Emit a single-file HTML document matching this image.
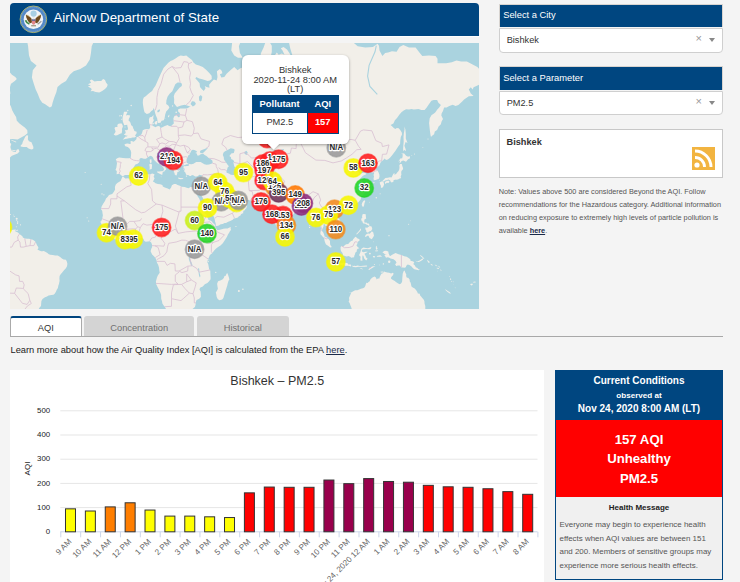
<!DOCTYPE html>
<html><head><meta charset="utf-8"><style>
html,body{margin:0;padding:0;width:740px;height:582px;overflow:hidden;background:#f4f4f4;font-family:"Liberation Sans",sans-serif}
.t{position:absolute;line-height:1;white-space:nowrap}
</style></head><body>
<div style="position:absolute;left:10px;top:3px;width:469px;height:33px;background:#004680;border-radius:4px 4px 0 0"></div><div style="position:absolute;left:10px;top:36px;width:470px;height:1.2px;background:#fdfdfd"></div><svg style="position:absolute;left:19px;top:5px" width="29" height="29" viewBox="0 0 29 29">
<circle cx="14.4" cy="14.3" r="13.3" fill="#5288c6" stroke="#a9b06a" stroke-width="1"/>
<circle cx="14.4" cy="14.3" r="12.2" fill="none" stroke="#7aa6d8" stroke-width="0.8" stroke-dasharray="1.2 0.8"/>
<circle cx="14.4" cy="14.3" r="9.7" fill="#f2f4f6"/>
<circle cx="14.6" cy="8.6" r="3.1" fill="#a8cfe3"/>
<path d="M6.8 9.8 C8.5 10.0 10.8 11.5 12.6 13.8 L13.0 17.4 L11.0 18.2 C9.0 16.8 7.2 13.5 6.8 9.8Z" fill="#6e4a1e"/><path d="M7.4 9.9 C8.5 10.2 9.5 10.8 10.3 11.6" stroke="#c9b46a" stroke-width="0.7" fill="none"/>
<path d="M22.2 9.8 C20.5 10.0 18.2 11.5 16.4 13.8 L16.0 17.4 L18.0 18.2 C20.0 16.8 21.8 13.5 22.2 9.8Z" fill="#6e4a1e"/><path d="M21.6 9.9 C20.5 10.2 19.5 10.8 18.7 11.6" stroke="#c9b46a" stroke-width="0.7" fill="none"/>
<path d="M12.9 14.4 L16.3 14.4 L16.3 18.0 C16.3 19.0 15.3 19.6 14.6 19.8 C13.9 19.6 12.9 19.0 12.9 18.0Z" fill="#e5858a"/>
<rect x="12.9" y="14.4" width="3.4" height="1.3" fill="#3d5f9e"/>
<path d="M6.5 15.2 C7.2 17.2 8.6 18.4 10.4 19.0" stroke="#3f8a45" stroke-width="1.8" fill="none"/>
<path d="M18.6 19.2 L22.4 16.2" stroke="#9a9a9a" stroke-width="1.2"/>
<path d="M12.2 20.8 L17.0 20.8" stroke="#8a7a60" stroke-width="1"/>
<circle cx="14.6" cy="13.2" r="1.0" fill="#e8e8e0"/>
</svg><div class="t" style="left:53.50px;top:11px;font-size:13.3px;font-weight:normal;color:#fff;">AirNow Department of State</div>
<div style="position:absolute;left:499px;top:3.5px;width:223.5px;height:23.6px;background:#004680;border:1px solid #d8d4d0;border-bottom:none;box-sizing:border-box"></div><div class="t" style="left:503.20px;top:11px;font-size:9.35px;font-weight:normal;color:#fff;">Select a City</div>
<div style="position:absolute;left:499px;top:28.400000000000002px;width:223.5px;height:24.2px;background:#fff;border:1px solid #cfcfcf;border-radius:0 0 4px 4px;box-sizing:border-box"></div><div class="t" style="left:506.70px;top:36px;font-size:9.2px;font-weight:normal;color:#333;">Bishkek</div>
<div class="t" style="left:695.5px;top:33.2px;font-size:11px;line-height:11px;color:#999">&#215;</div><div style="position:absolute;left:708.5px;top:38.400000000000006px;width:0;height:0;border-left:3.5px solid transparent;border-right:3.5px solid transparent;border-top:4px solid #888"></div><div style="position:absolute;left:499px;top:66.2px;width:223.5px;height:23.6px;background:#004680;border:1px solid #d8d4d0;border-bottom:none;box-sizing:border-box"></div><div class="t" style="left:503.20px;top:74px;font-size:9.35px;font-weight:normal;color:#fff;">Select a Parameter</div>
<div style="position:absolute;left:499px;top:91.1px;width:223.5px;height:24.2px;background:#fff;border:1px solid #cfcfcf;border-radius:0 0 4px 4px;box-sizing:border-box"></div><div class="t" style="left:506.70px;top:99px;font-size:9.2px;font-weight:normal;color:#333;">PM2.5</div>
<div class="t" style="left:695.5px;top:95.89999999999999px;font-size:11px;line-height:11px;color:#999">&#215;</div><div style="position:absolute;left:708.5px;top:101.1px;width:0;height:0;border-left:3.5px solid transparent;border-right:3.5px solid transparent;border-top:4px solid #888"></div><div style="position:absolute;left:499px;top:129px;width:223.5px;height:49px;background:#fff;border:1px solid #c8c8c8;box-sizing:border-box"></div><div class="t" style="left:506.50px;top:138px;font-size:9.2px;font-weight:bold;color:#333;">Bishkek</div>
<svg style="position:absolute;left:692px;top:147px" width="23" height="23" viewBox="0 0 23 23">
<rect width="23" height="23" fill="#f2b440"/>
<circle cx="5" cy="18" r="2.6" fill="#fff"/>
<path d="M3 10.5 A9.5 9.5 0 0 1 12.5 20" stroke="#fff" stroke-width="2.9" fill="none"/>
<path d="M3 4 A16 16 0 0 1 19 20" stroke="#fff" stroke-width="2.9" fill="none"/>
</svg><div class="t" style="left:498.70px;top:188px;font-size:7.33px;font-weight:normal;color:#555;">Note: Values above 500 are considered Beyond the AQI. Follow</div>
<div class="t" style="left:498.70px;top:201px;font-size:7.33px;font-weight:normal;color:#555;">recommendations for the Hazardous category. Additional information</div>
<div class="t" style="left:498.70px;top:214px;font-size:7.33px;font-weight:normal;color:#555;">on reducing exposure to extremely high levels of particle pollution is</div>
<div class="t" style="left:498.70px;top:227px;font-size:7.33px;font-weight:normal;color:#555;">available <b style="color:#1a2a4a;text-decoration:underline">here</b>.</div>
<div style="position:absolute;left:10px;top:43px;width:469px;height:266px;overflow:hidden;background:#aad3df"><svg width="469" height="266" style="position:absolute;left:0;top:0"><g fill="#f2efe9"><path d="M-15.2 -58.2L-15.2 -38.2L-1.9 -22.9L13.3 -17.5L16.2 -6.6L18.1 3.3L19.0 12.4L20.9 18.1L26.6 22.4L22.8 27.2L21.9 34.6L23.8 40.7L25.7 46.6L27.6 50.4L30.0 56.6L32.3 59.8L35.2 61.3L38.0 63.3L39.9 64.4L41.8 63.3L42.6 59.8L44.1 55.0L46.4 49.1L47.5 43.9L51.3 40.7L56.0 38.0L59.8 31.7L63.7 28.2L70.3 26.1L76.0 22.4L79.8 16.4L80.9 10.6L81.7 3.3L84.6 -3.2L86.5 -13.7L88.3 -29.5L85.5 -58.2Z"/><path d="M-57.0 -6.6L-28.5 -5.2L-20.9 3.3L-11.4 12.4L-6.7 17.0L-3.8 21.9L-1.5 27.7L1.9 31.7L5.3 34.1L6.8 36.1L4.8 38.0L1.0 40.7L-0.4 45.2L0.4 50.4L-1.9 53.8L-5.7 54.6L-13.3 51.7L-24.7 45.2L-57.0 38.4Z"/><path d="M-66.5 135.9L-20.9 135.9L-17.1 122.7L-10.4 120.2L-9.5 114.5L-4.8 112.4L-3.4 111.1L-1.9 112.1L-1.5 114.8L-0.4 115.0L1.9 112.7L5.7 111.3L7.6 110.5L9.5 108.6L8.4 105.9L6.7 106.7L5.7 108.9L2.9 108.6L1.3 107.2L0.4 103.9L1.3 101.1L-0.6 99.3L-3.4 99.3L-6.1 98.4L-2.8 96.4L2.9 96.1L7.6 96.4L12.0 94.0L14.8 92.5L17.5 90.3L17.3 87.2L14.8 84.6L12.4 82.7L9.5 80.4L6.8 77.7L6.1 73.9L4.2 71.0L2.3 67.4L0.6 62.5L-2.5 60.6L-5.7 62.9L-9.5 66.3L-13.3 59.8L-24.7 54.2L-66.5 47.4Z"/><path d="M10.6 103.6L13.3 103.9L16.7 103.9L18.6 105.6L21.3 106.4L23.2 106.1L23.4 103.9L22.4 101.6L21.5 99.3L19.0 98.2L17.9 96.4L18.1 92.5L16.7 92.2L15.2 93.7L14.4 95.5L12.7 99.0L12.2 101.1L10.8 102.2Z"/><path d="M1.0 97.3L6.1 99.6L6.3 98.7L1.9 97.0Z"/><path d="M1.1 106.7L5.5 107.2L5.7 108.1L2.7 107.8Z"/><path d="M-28.5 184.0L-6.7 185.6L-4.8 186.7L-1.9 186.7L1.3 187.3L2.9 186.7L5.7 186.6L5.9 187.3L4.9 188.1L6.7 188.9L8.0 189.4L9.1 190.8L10.8 191.9L12.4 193.3L12.9 194.4L14.8 195.6L17.1 195.8L19.0 195.7L20.9 196.2L22.8 196.7L24.7 198.1L25.5 199.0L26.2 200.2L27.0 202.2L27.9 203.6L28.5 205.1L27.4 206.6L29.3 207.4L31.2 208.3L32.3 208.3L33.8 208.1L35.7 208.9L37.4 209.9L38.8 211.2L40.3 211.8L42.8 212.1L45.2 212.5L47.7 212.5L49.8 213.7L51.9 215.6L53.6 216.5L55.9 216.7L56.8 218.4L57.4 220.7L57.0 223.2L55.9 225.3L54.2 227.1L52.4 229.2L50.5 231.5L49.6 233.1L49.4 235.4L49.6 237.8L49.0 240.8L48.3 242.8L47.9 245.0L46.9 246.6L45.8 249.0L44.7 250.7L43.5 251.7L41.4 251.9L38.6 252.5L37.0 253.6L35.0 254.2L32.5 256.1L31.4 258.0L31.2 260.3L31.0 263.1L29.6 264.4L28.1 267.2L26.6 270.3L-28.5 278.1Z"/><path d="M5.9 187.7L7.6 186.4L7.8 187.7L6.3 187.9Z"/><path d="M112.3 134.1L110.6 138.0L107.3 140.1L105.8 141.6L104.9 144.1L105.1 146.5L103.9 148.7L102.2 150.9L99.0 152.0L97.8 153.7L96.0 155.6L95.0 157.9L93.3 160.6L91.6 163.5L91.0 166.2L92.2 167.8L92.5 170.2L92.9 172.2L92.2 175.8L91.2 178.2L90.2 178.8L91.6 180.9L91.8 183.1L92.7 184.4L94.0 185.6L95.6 186.7L96.9 188.3L98.2 189.4L99.0 191.4L100.3 193.1L101.8 194.0L103.9 195.2L106.0 197.1L109.1 198.6L111.2 198.1L114.0 197.3L116.8 197.3L119.7 197.9L122.6 196.7L125.4 195.8L128.2 195.0L132.1 195.0L133.4 196.0L134.3 197.9L135.8 198.8L137.8 198.6L139.7 198.3L141.2 199.6L142.1 201.7L142.1 204.1L141.2 206.1L140.6 208.3L142.1 211.4L144.0 213.3L145.9 215.7L146.7 218.0L146.9 219.6L148.2 221.9L149.0 224.6L149.3 227.6L149.7 229.8L147.8 232.5L146.9 234.8L145.9 238.4L146.1 241.0L147.4 243.8L149.0 246.8L150.5 249.9L151.1 251.9L151.2 255.7L152.0 258.2L152.4 260.5L153.5 262.2L154.8 263.7L156.4 266.8L157.5 270.1L158.3 273.5L158.7 276.2L161.5 277.6L166.2 275.8L172.1 275.8L175.8 273.9L179.6 270.1L181.4 267.9L182.8 265.7L184.9 264.0L185.6 261.4L186.0 258.6L186.6 257.1L189.2 255.7L190.9 254.0L190.8 250.9L190.6 248.6L189.4 246.2L190.4 244.6L192.8 243.4L194.8 241.2L197.4 240.0L198.9 238.4L200.6 236.2L200.6 233.9L200.4 230.9L200.3 227.8L199.1 226.1L198.6 223.2L198.2 220.9L197.2 219.0L198.0 216.3L198.9 214.6L199.9 212.1L201.6 210.8L202.9 209.3L204.2 207.6L206.1 205.5L208.1 204.0L210.5 202.6L212.8 200.3L214.3 198.1L215.6 196.0L217.0 193.7L218.1 191.2L219.3 189.6L220.0 187.9L221.0 186.9L220.6 185.6L221.0 184.2L219.4 184.4L217.6 185.4L215.6 185.6L213.4 185.8L210.9 186.6L209.0 187.1L207.1 186.9L205.8 185.0L205.0 184.0L205.6 182.9L204.2 181.1L202.9 179.9L202.0 178.6L200.4 177.6L199.1 177.2L198.2 176.4L197.4 173.8L196.6 171.8L194.8 170.6L194.4 168.8L194.2 166.2L193.6 164.1L191.3 162.1L190.9 160.2L190.2 158.1L189.2 155.6L187.9 153.7L187.3 152.4L186.0 149.8L185.4 147.4L184.9 144.3L182.4 143.7L180.5 144.1L178.6 145.2L176.7 144.8L174.8 144.1L171.4 143.7L169.9 142.8L167.6 142.1L165.9 141.0L164.0 141.0L161.9 142.3L161.1 144.6L159.6 146.5L157.7 145.4L154.8 144.6L152.8 143.4L152.4 142.1L150.1 141.2L147.8 141.0L145.5 140.3L144.4 139.2L142.9 138.5L143.8 136.9L144.6 135.2L143.6 133.8L144.6 131.5L143.1 130.8L142.1 130.5L139.8 131.5L136.8 131.2L133.9 131.9L131.5 131.5L129.2 131.7L126.3 132.2L123.5 133.8L121.2 135.0L119.3 135.7L117.8 135.2L115.3 135.5L113.4 133.8Z"/><path d="M217.2 229.9L218.1 231.9L218.9 234.5L219.4 236.4L218.5 237.8L217.7 240.4L217.2 242.8L216.2 245.8L215.3 248.8L214.3 251.9L213.4 255.0L212.2 256.5L209.4 257.3L207.7 256.1L206.7 254.0L206.3 251.5L205.8 249.5L206.9 247.8L207.9 245.8L207.5 243.4L207.1 240.8L208.1 238.2L210.3 237.4L212.4 236.6L213.8 235.0L214.5 233.1L215.8 232.7L216.4 230.9Z"/><path d="M112.9 133.6L111.5 132.4L109.4 130.8L106.6 131.2L106.8 128.1L105.5 126.9L106.4 124.4L106.6 122.7L107.0 120.2L106.6 118.1L105.8 116.3L107.7 115.0L109.2 114.5L113.0 115.0L115.9 115.3L118.8 115.3L120.7 115.0L121.0 112.4L121.2 109.7L120.7 107.5L119.3 105.3L117.8 103.9L115.3 103.3L114.4 101.6L115.9 100.8L117.8 100.5L119.7 101.1L120.8 100.8L120.5 98.2L121.2 97.9L123.7 98.7L125.4 97.3L126.5 96.1L126.5 94.3L128.2 93.7L130.2 92.5L131.5 91.2L132.2 89.4L132.8 87.2L134.9 86.2L137.0 85.9L139.1 86.2L140.2 84.6L140.0 82.0L139.1 79.7L138.9 76.3L139.8 74.2L141.6 73.9L143.6 72.1L143.3 74.6L143.1 76.6L144.2 76.6L143.4 78.3L142.1 80.4L142.5 82.7L144.2 83.6L145.3 84.3L147.2 83.3L149.2 83.0L150.7 84.9L152.9 84.0L154.8 83.0L157.7 82.0L159.0 83.0L160.9 83.3L162.4 81.7L163.8 80.4L163.6 77.7L163.4 75.2L164.5 73.1L166.4 71.7L168.2 74.2L169.7 73.9L169.9 69.9L168.3 68.8L168.0 66.6L170.2 65.5L173.8 65.5L176.7 65.5L179.6 64.0L180.9 64.0L178.6 62.9L174.8 61.7L171.0 62.5L167.0 64.0L165.3 62.1L164.0 60.2L164.2 56.6L163.8 53.3L164.7 50.4L166.6 48.3L169.5 44.8L171.8 43.0L171.9 40.7L170.2 39.4L167.6 39.4L165.3 41.2L164.0 44.3L162.3 48.3L159.6 50.8L157.5 53.8L156.4 57.4L156.2 60.9L158.3 62.5L159.4 64.4L158.3 66.3L156.2 68.5L155.2 71.4L154.7 74.6L153.9 77.3L151.6 77.7L150.5 79.7L148.0 80.0L147.4 77.3L147.2 75.6L145.9 72.4L145.0 69.6L144.4 66.6L143.6 65.1L142.9 67.0L141.4 68.1L139.3 70.3L136.8 71.0L134.5 69.2L133.8 66.6L133.2 62.9L132.8 59.8L133.0 56.6L133.8 54.6L135.7 53.3L137.9 51.3L140.0 49.6L142.1 47.9L143.6 45.2L145.3 43.0L146.9 39.4L148.6 35.6L150.1 32.2L152.0 28.2L153.5 25.1L155.8 22.4L158.3 19.7L160.6 18.1L163.0 17.0L165.9 15.3L168.3 13.6L170.8 12.4L173.5 13.0L176.3 12.4L179.0 14.7L182.0 17.0L183.2 19.2L185.8 21.4L189.1 22.4L192.8 24.0L196.6 27.2L199.5 30.2L201.6 32.7L201.8 36.1L199.9 37.5L197.6 38.0L194.8 37.0L191.5 36.1L189.1 35.6L186.2 34.1L185.4 35.6L187.3 37.5L189.6 40.3L190.0 43.9L191.7 46.1L193.8 47.9L195.5 45.2L194.8 43.0L196.6 43.9L199.5 44.8L199.1 41.7L201.4 38.9L203.9 36.5L206.7 37.5L207.5 34.1L206.9 28.2L209.9 26.1L211.7 27.7L212.4 30.2L209.9 31.2L211.3 34.6L214.3 34.1L216.6 30.7L220.4 27.2L224.2 24.0L227.6 27.2L229.9 25.6L233.7 24.0L236.6 26.1L239.0 24.6L239.0 19.2L243.2 20.3L246.6 22.4L250.4 23.5L253.1 26.6L254.4 23.5L252.7 20.3L250.4 15.3L250.8 10.6L253.6 4.5L255.2 0.1L259.4 -1.2L261.8 2.7L261.8 8.8L260.9 13.0L261.4 18.1L261.2 24.0L263.0 27.2L260.9 32.7L263.3 34.6L266.0 31.7L265.6 26.1L264.1 21.9L263.5 15.8L264.7 12.4L266.8 9.4L268.7 11.8L271.7 10.6L274.5 11.8L272.5 7.6L270.8 5.2L273.6 3.9L277.0 6.4L279.7 10.6L282.0 14.7L280.6 17.5L283.1 18.6L282.7 13.6L280.2 5.2L278.4 -3.2L288.8 -10.1L307.8 -21.3L321.1 -35.5L332.5 -27.0L338.8 -17.5L339.1 -5.2L343.9 0.1L347.7 3.3L355.3 4.5L362.9 3.9L367.6 0.7L369.0 2.7L369.5 7.6L372.4 13.0L375.2 10.0L378.1 9.4L381.9 8.2L386.6 8.8L389.5 3.9L393.3 2.0L399.0 4.5L405.6 4.5L409.4 9.4L412.3 13.0L418.9 12.4L425.6 13.0L427.5 15.8L427.5 20.3L431.3 20.3L436.1 20.3L441.8 19.2L446.5 17.5L451.2 18.6L456.9 18.6L462.6 21.4L467.4 24.0L476.9 33.7L484.5 38.4L476.9 47.4L469.3 41.7L466.4 43.0L463.6 44.3L462.6 46.6L460.8 44.3L458.8 46.6L460.8 50.4L463.6 52.9L458.8 53.3L454.1 56.6L452.2 58.6L448.4 62.1L445.6 62.9L442.7 61.7L439.3 62.9L436.6 64.4L434.1 64.4L433.0 68.1L431.7 70.3L431.3 72.4L433.0 75.9L431.7 78.3L430.7 81.4L428.6 83.6L427.1 86.9L424.8 88.4L424.1 91.2L421.8 93.1L421.0 94.0L420.5 91.9L419.9 87.8L419.5 84.0L419.1 80.0L419.7 75.2L421.6 72.1L423.3 71.0L425.2 69.6L427.5 66.3L429.0 64.8L430.9 62.1L428.4 59.8L427.1 57.0L423.7 57.0L421.4 57.8L418.9 61.3L416.7 64.4L414.6 67.0L411.3 67.0L408.5 65.9L406.4 66.3L403.8 66.6L401.5 65.9L399.0 66.6L396.1 66.3L393.7 67.4L391.4 69.2L389.3 71.7L387.0 74.9L384.9 77.3L383.4 80.4L380.6 82.0L382.3 83.6L383.8 84.9L385.3 85.9L386.8 84.9L388.7 85.3L390.4 87.2L391.8 89.4L392.0 91.6L390.8 94.0L390.3 97.6L390.1 101.1L388.4 103.3L386.6 105.9L385.5 107.8L383.6 110.2L381.7 112.7L380.0 114.8L377.9 116.6L376.0 116.9L374.7 115.6L374.1 116.3L372.8 117.4L371.8 118.1L370.9 118.9L369.9 120.9L369.7 122.0L368.2 123.5L366.7 124.4L365.6 125.4L365.9 126.4L367.5 127.4L368.6 129.6L369.4 131.7L369.5 133.8L368.8 135.7L367.5 136.2L365.6 136.9L363.9 137.3L363.5 135.5L364.0 133.6L363.5 131.7L364.2 130.5L363.3 129.3L361.9 129.6L361.0 128.6L361.6 127.1L360.6 124.9L359.1 124.4L356.8 125.2L354.7 126.4L354.0 124.9L355.5 123.0L353.8 121.7L352.4 122.7L350.7 124.2L349.6 125.9L347.7 126.2L346.9 127.4L347.9 128.6L349.2 129.8L350.2 131.0L352.3 130.0L353.8 129.8L355.7 130.3L356.2 131.2L354.5 131.9L353.0 132.7L351.9 133.8L350.4 135.5L350.2 136.9L352.1 137.5L352.8 139.8L353.2 141.4L354.5 142.5L355.1 143.4L353.6 145.0L355.1 145.4L355.1 146.8L354.4 148.1L354.9 149.4L354.0 150.7L353.0 152.0L352.3 153.3L351.1 154.5L350.7 156.4L349.8 157.5L348.6 159.0L347.3 159.8L345.8 161.0L344.5 162.3L342.6 162.7L340.5 163.7L339.1 163.7L338.0 164.3L335.9 165.0L334.0 165.4L333.1 166.4L332.9 167.6L331.9 166.6L332.3 165.4L331.5 165.0L329.6 165.0L328.5 165.2L326.8 166.2L326.0 167.2L324.9 168.4L324.3 170.0L324.7 171.4L325.9 173.0L327.2 174.4L328.9 175.8L330.2 177.4L331.0 180.1L331.2 182.9L331.0 184.8L330.0 185.6L328.3 186.6L326.4 187.3L325.9 188.5L324.5 189.4L323.4 190.6L322.6 190.6L322.8 188.7L322.6 187.3L321.7 186.9L320.3 186.7L319.4 185.6L319.0 184.2L317.7 183.4L316.4 182.7L315.2 182.7L315.2 181.3L313.5 181.3L313.5 183.4L312.2 186.2L312.0 188.1L313.3 189.4L314.1 191.4L314.6 193.5L316.0 193.9L317.7 195.2L319.0 196.5L320.0 197.9L320.0 200.0L320.3 201.9L321.5 203.6L321.5 204.3L320.1 204.5L319.0 203.6L316.9 202.1L316.0 201.5L315.2 199.8L314.6 198.1L314.3 196.3L314.1 195.0L312.9 193.9L312.0 192.7L310.6 191.6L310.3 190.0L310.8 187.5L311.0 185.2L310.6 183.4L310.3 181.5L309.5 179.0L308.9 176.6L308.8 175.0L307.0 175.0L305.5 176.4L304.0 176.4L303.2 175.6L302.7 173.0L303.0 171.0L302.1 169.6L301.0 168.4L299.8 167.4L298.9 166.2L298.3 164.5L297.9 163.5L297.0 162.5L295.6 163.1L295.1 164.3L293.7 164.3L292.8 164.7L291.1 165.0L289.2 165.4L288.6 166.6L287.7 168.2L285.8 169.0L284.2 170.2L283.1 171.4L281.6 173.0L279.9 174.2L279.7 175.2L278.0 175.8L277.0 176.6L276.1 177.2L275.7 179.3L276.1 181.3L275.7 183.1L275.1 185.0L275.1 186.9L274.2 187.3L273.6 189.3L272.3 190.0L271.5 191.2L270.8 191.6L269.8 191.0L269.0 190.0L268.5 188.3L267.7 186.2L266.9 184.2L265.8 182.3L265.0 180.1L264.1 178.2L263.3 176.2L262.8 173.8L262.2 171.8L261.8 169.8L261.8 167.6L261.6 165.8L261.2 164.5L259.4 166.2L257.4 166.4L255.7 164.5L255.0 163.3L257.1 162.3L255.7 162.1L253.6 161.0L251.8 160.0L251.2 158.5L250.0 157.3L247.9 157.3L246.1 157.5L243.2 157.5L240.5 157.5L238.1 157.1L236.6 156.9L235.2 156.7L233.5 156.4L232.4 155.4L231.8 153.7L230.7 153.3L228.9 154.3L227.6 154.8L225.9 154.3L224.6 153.0L223.1 152.4L221.5 151.8L220.4 149.8L220.0 148.3L218.7 147.0L217.6 147.2L216.4 146.5L215.5 147.2L214.5 147.2L214.7 148.7L215.3 150.3L216.0 151.8L217.2 152.8L217.9 153.9L218.7 155.0L218.9 156.7L219.6 157.9L220.0 158.3L220.4 156.7L221.2 155.6L221.5 157.3L221.5 159.0L222.7 159.8L225.1 159.8L227.1 159.4L228.4 158.1L229.3 157.1L230.1 155.8L230.7 155.0L230.5 156.7L230.7 158.1L231.4 159.4L232.6 160.4L234.1 160.8L235.2 161.0L236.4 162.5L237.1 163.1L236.6 164.3L236.2 165.4L235.2 166.2L234.6 167.4L233.9 167.2L233.1 169.0L233.3 170.2L232.2 170.4L231.0 171.2L230.5 172.4L228.6 173.6L228.0 174.6L225.3 175.2L223.8 175.6L222.7 176.8L220.8 177.8L217.7 179.0L216.0 180.1L214.5 180.1L212.8 180.9L210.7 181.3L209.2 182.3L208.1 182.7L206.1 182.9L205.8 181.7L205.6 179.9L205.0 178.6L204.8 176.8L204.4 175.2L203.9 173.8L202.9 172.4L201.8 170.8L201.0 169.2L199.9 167.8L198.7 166.6L197.8 165.0L197.6 163.1L196.6 160.8L195.3 159.4L194.2 157.9L193.2 155.8L192.3 154.1L191.1 152.6L190.2 151.3L189.6 150.0L189.8 148.3L189.2 149.6L188.9 151.1L188.5 152.0L187.5 150.9L186.4 149.6L185.4 147.4L184.9 144.3L187.2 144.8L188.5 144.3L189.2 143.2L189.8 141.4L190.2 140.3L190.9 138.5L191.7 136.9L191.7 135.0L191.5 133.4L192.3 132.2L191.1 132.2L189.2 131.7L188.1 132.9L186.6 133.4L185.2 133.4L183.2 132.2L181.6 131.9L181.3 132.9L179.7 133.1L178.2 131.9L176.5 131.9L175.8 130.8L175.2 129.3L173.8 128.1L174.8 127.1L174.4 125.9L174.2 124.9L173.1 124.2L173.7 123.5L174.4 123.0L175.8 123.0L177.7 123.0L179.0 122.0L178.6 121.2L176.7 121.5L175.2 122.5L174.0 122.2L173.1 122.5L171.6 121.7L170.1 121.7L168.5 122.2L167.8 123.2L166.4 122.5L166.4 123.9L167.2 125.4L166.8 126.7L168.2 127.6L169.1 128.6L167.4 129.1L167.2 130.5L166.6 132.2L166.1 132.4L164.7 131.5L164.5 129.8L163.6 129.1L164.2 127.9L162.8 126.7L162.1 125.4L161.3 124.2L160.4 123.2L160.2 121.5L160.7 119.4L159.4 118.1L158.5 117.4L156.8 116.3L155.6 115.6L153.7 114.8L152.4 113.2L151.6 111.3L150.7 110.2L149.3 109.2L147.6 110.0L146.9 111.1L147.2 113.2L148.2 114.2L149.5 115.8L150.3 117.6L151.8 118.9L153.9 119.7L156.0 121.2L157.7 122.5L158.7 123.5L158.3 124.4L157.1 123.2L155.8 122.7L155.0 124.4L156.0 125.4L156.0 126.7L154.8 127.6L154.1 128.8L153.3 129.1L153.3 127.4L154.1 126.4L153.3 124.4L152.6 123.7L151.8 122.7L150.5 122.0L149.5 120.9L148.0 120.4L146.7 119.4L145.7 118.4L144.6 117.6L143.6 116.3L143.1 114.8L142.1 113.5L140.6 112.7L139.5 113.2L137.8 114.2L136.0 115.8L133.9 115.8L132.2 115.3L130.9 115.0L129.4 116.1L129.6 118.4L129.0 119.4L127.5 120.7L125.4 121.5L124.8 122.5L123.5 124.4L122.9 125.4L123.9 127.1L122.6 128.1L122.0 129.8L120.7 130.5L119.5 131.9L117.6 131.9L115.1 131.9L114.0 132.4Z"/><path d="M112.7 96.7L115.0 96.1L116.8 95.8L118.8 95.2L120.7 94.9L122.6 94.6L124.4 94.6L126.2 93.4L125.0 92.5L126.5 90.6L126.7 88.8L124.4 88.1L123.9 86.5L123.3 85.6L122.6 83.3L121.2 82.3L120.5 79.7L119.5 78.3L118.6 77.7L118.8 75.9L119.7 74.2L120.1 72.4L117.8 72.1L115.9 72.4L117.2 69.6L117.6 68.8L115.0 68.8L114.0 68.8L113.4 71.4L112.7 73.5L112.5 75.9L112.9 78.7L113.6 80.4L114.2 82.3L115.9 82.0L117.2 81.7L117.4 83.3L118.0 85.3L117.6 86.9L115.9 87.2L114.8 86.9L115.1 88.1L115.7 89.1L115.5 90.3L113.8 91.6L115.3 92.2L117.0 92.8L117.8 92.5L116.8 93.4L115.5 93.4L114.0 95.2Z"/><path d="M111.7 90.3L112.1 87.8L111.9 85.9L112.9 83.6L112.5 82.0L111.7 80.4L109.8 80.4L107.9 81.0L107.2 83.0L107.7 84.0L105.5 84.0L104.5 84.9L105.1 86.9L105.6 88.8L104.7 90.3L103.7 91.6L105.3 92.5L107.2 92.2L109.1 91.2L110.6 90.6Z"/><path d="M77.9 41.2L81.1 39.8L79.8 37.5L81.7 36.5L84.6 38.4L87.4 38.0L91.2 38.0L93.1 36.1L95.0 37.0L96.0 39.4L97.7 41.7L96.9 43.9L95.0 46.1L92.2 47.9L89.3 49.6L85.5 49.1L83.0 47.9L80.6 48.3L81.7 46.6L81.1 45.2L77.9 43.5L80.8 42.6Z"/><path d="M147.1 128.6L149.2 128.4L153.1 128.1L152.6 129.8L152.2 131.9L150.7 131.2L148.2 130.0L147.1 129.3Z"/><path d="M139.1 121.5L141.0 120.7L142.1 121.7L141.9 123.9L141.7 125.9L140.6 126.2L139.5 126.7L139.7 124.4L139.5 122.7Z"/><path d="M139.8 116.6L141.4 116.3L141.6 118.7L141.0 120.4L140.2 119.9L139.8 118.4Z"/><path d="M168.2 134.5L170.1 135.0L173.5 135.2L172.9 135.9L170.1 136.2L168.2 135.5Z"/><path d="M184.9 135.7L187.2 135.2L189.2 134.3L188.1 136.2L186.2 136.9L185.1 136.6Z"/><path d="M144.4 79.7L145.9 78.0L147.4 78.0L147.2 80.4L146.3 81.7L144.8 81.0Z"/><path d="M142.1 79.7L143.4 79.7L144.0 81.0L142.7 81.4Z"/><path d="M157.9 73.5L159.2 71.4L159.4 73.1L158.5 74.6Z"/><path d="M221.3 7.6L224.2 12.4L228.0 14.7L232.8 14.7L229.9 10.0L228.9 3.3L230.8 -1.9L233.7 -10.1L241.3 -19.8L252.7 -28.6L245.1 -29.5L233.7 -19.8L226.1 -12.3L222.3 -1.9Z"/><path d="M234.6 16.4L238.4 18.1L236.6 19.7L234.8 18.1Z"/><path d="M275.1 188.3L276.3 188.7L277.8 190.6L278.9 192.9L278.5 194.8L276.6 195.8L275.5 195.0L275.1 192.7L275.1 190.8Z"/><path d="M372.2 138.2L373.9 136.6L375.4 135.0L377.9 134.8L380.0 134.3L381.5 134.5L382.3 133.1L383.4 130.8L384.6 130.0L384.4 131.7L386.1 131.0L387.4 129.3L388.6 127.9L389.3 126.2L389.5 124.2L389.3 122.5L390.1 120.9L391.8 120.9L392.3 123.0L393.1 125.2L392.7 126.7L391.4 128.1L391.2 130.0L391.4 131.7L390.6 133.4L391.2 134.3L390.1 135.7L389.1 135.5L388.7 136.2L387.6 136.2L387.2 136.9L386.1 136.6L384.0 136.9L383.4 137.5L383.6 138.5L381.9 139.6L380.8 138.9L380.2 137.5L378.5 136.6L376.6 137.3L375.1 137.5L373.9 138.5L372.4 138.5Z"/><path d="M369.7 139.6L371.4 138.5L372.6 138.5L373.7 139.6L374.1 141.4L373.2 143.7L372.0 145.0L370.9 144.6L370.9 142.8L370.1 141.2L369.9 140.3Z"/><path d="M375.2 138.7L377.3 137.8L379.2 137.8L379.4 138.7L378.5 140.1L376.8 139.8L375.4 141.0L374.9 139.8Z"/><path d="M389.5 120.2L389.9 118.1L389.1 117.4L390.3 115.6L392.2 115.3L392.7 112.9L392.5 110.2L394.2 110.5L396.1 112.7L398.1 113.7L399.6 112.9L400.1 115.3L398.1 116.3L396.0 118.7L393.3 117.6L391.6 118.1L390.4 119.7Z"/><path d="M393.3 108.3L393.1 106.1L393.3 102.8L393.7 98.4L393.5 94.0L393.9 90.0L394.6 86.2L394.4 83.6L395.4 86.5L395.8 90.9L395.8 95.5L397.5 99.9L395.6 99.0L394.4 102.8L395.6 106.1L396.1 108.1L394.2 107.0Z"/><path d="M351.7 162.1L352.1 160.0L353.4 157.9L354.5 157.3L355.3 157.9L354.5 160.0L354.0 162.7L353.0 164.3L352.3 163.1Z"/><path d="M329.8 169.8L331.7 168.2L333.6 168.0L334.4 169.0L333.4 170.8L331.7 171.8L330.0 171.2Z"/><path d="M352.6 171.2L353.8 171.0L355.7 171.2L355.9 174.0L356.2 175.6L354.5 176.6L354.2 178.2L354.7 179.7L356.4 179.5L357.4 180.5L358.7 180.5L359.5 182.1L359.1 183.1L357.8 182.1L356.4 181.5L354.9 180.5L353.8 180.7L352.6 179.5L352.6 178.6L351.7 178.2L351.1 175.8L352.3 175.0L352.1 173.2Z"/><path d="M355.1 193.7L355.5 192.1L357.2 190.8L358.7 190.6L359.7 190.8L360.6 189.8L361.9 188.3L363.3 189.4L364.0 192.7L362.9 194.6L361.8 196.3L359.5 195.0L358.5 192.7L357.2 192.7L355.9 193.9Z"/><path d="M355.3 184.4L357.2 184.8L359.7 183.1L361.6 183.4L362.3 186.0L361.0 187.9L359.1 188.5L358.0 189.8L356.4 189.1L356.1 187.1L355.5 186.7Z"/><path d="M346.2 191.0L348.1 188.9L349.8 186.9L350.7 185.2L351.1 186.9L348.8 189.4L346.8 191.4Z"/><path d="M330.6 204.0L331.7 203.0L333.3 203.8L335.0 202.1L336.3 201.3L338.2 200.9L339.7 199.2L341.2 198.1L342.8 197.5L343.1 196.3L344.3 195.0L345.4 193.7L346.4 194.2L347.1 195.2L348.5 195.8L350.0 196.9L348.5 198.3L347.5 199.2L347.3 201.1L346.4 202.2L347.7 204.0L349.4 205.3L347.7 205.7L346.9 206.8L346.6 208.7L345.4 209.5L344.9 211.4L344.3 212.7L344.1 214.2L342.4 214.6L341.2 214.8L340.1 213.7L338.4 213.1L336.9 213.5L335.7 213.3L334.4 212.7L333.1 212.5L332.7 210.8L332.3 209.7L331.4 208.7L330.8 207.6L330.6 205.9Z"/><path d="M323.4 220.0L324.9 218.4L326.8 218.4L329.3 219.0L330.6 220.0L333.3 220.1L334.2 219.2L335.7 220.0L337.4 220.1L338.2 221.5L340.7 221.5L341.2 222.2L340.9 223.6L338.6 222.8L335.4 222.8L332.5 222.2L330.0 221.7L327.6 221.3L325.7 221.1L324.1 220.3Z"/><path d="M342.2 222.4L343.3 223.0L344.1 222.8L345.8 223.0L347.7 222.6L349.6 223.0L351.1 223.0L353.4 222.8L356.2 222.6L357.2 222.8L357.0 223.4L354.4 223.8L351.5 223.8L348.6 223.8L345.8 224.2L343.9 224.0L342.6 223.8Z"/><path d="M349.6 225.1L352.1 225.5L353.0 226.5L350.7 225.7Z"/><path d="M358.3 226.7L360.0 224.7L362.1 223.4L365.4 223.0L363.5 224.2L361.0 225.7L359.1 226.9Z"/><path d="M350.5 217.5L350.4 215.2L350.7 213.7L349.4 212.7L349.2 211.8L350.2 209.7L350.9 207.4L351.3 205.9L352.1 205.3L353.4 204.5L355.9 205.1L357.8 205.3L360.0 204.5L361.4 204.0L360.6 205.9L359.1 206.2L356.4 206.1L353.8 206.2L351.9 206.8L351.9 208.5L353.4 209.3L355.9 208.7L357.8 208.7L355.9 209.9L354.4 210.8L355.5 212.7L356.2 214.4L357.6 215.7L356.2 217.5L355.1 216.5L354.2 215.6L353.4 212.7L352.4 212.5L352.3 214.6L352.4 217.7Z"/><path d="M365.9 203.4L366.7 202.8L366.9 204.7L368.0 205.1L366.9 206.1L367.8 208.1L366.7 208.7L366.5 206.6L365.8 205.5Z"/><path d="M366.7 213.1L370.1 212.3L372.2 213.5L369.7 213.7L367.1 213.8Z"/><path d="M362.9 212.9L365.2 213.3L364.8 214.4L363.1 214.2Z"/><path d="M372.4 209.5L374.1 208.1L376.0 207.8L378.3 208.5L378.7 210.8L380.0 213.3L381.7 211.9L383.6 211.0L385.5 209.9L388.6 211.2L391.4 211.9L394.2 213.3L396.7 213.8L398.6 215.0L400.3 216.3L400.5 217.7L403.4 218.4L404.3 219.8L403.2 220.9L404.7 222.2L405.8 224.2L407.4 225.1L408.5 226.3L410.0 226.7L408.5 227.3L406.6 226.7L404.3 226.3L402.8 224.9L401.3 223.2L399.4 221.9L397.7 221.5L396.3 222.8L395.8 224.2L394.4 224.7L392.9 224.6L391.4 224.4L389.7 222.6L387.8 222.4L386.3 223.0L385.1 221.3L386.5 219.8L385.7 218.0L383.6 216.3L380.6 215.4L378.7 214.4L377.5 214.2L376.0 214.8L375.2 213.3L374.3 212.3L376.0 211.4L377.7 211.4L374.9 211.2L373.5 210.0Z"/><path d="M405.3 217.7L407.6 218.2L409.6 217.5L411.7 216.1L412.7 215.2L413.1 216.5L411.3 217.7L408.9 219.0L406.6 218.6Z"/><path d="M410.0 212.1L411.9 213.1L413.4 214.6L414.4 216.1L413.8 215.9L412.3 214.4L410.2 212.7Z"/><path d="M417.2 216.7L418.9 218.2L419.9 219.6L418.4 219.8L417.4 218.0Z"/><path d="M420.8 220.7L422.8 222.1L422.2 222.8L420.7 221.5Z"/><path d="M424.8 221.5L427.1 222.8L427.3 223.4L425.0 222.2Z"/><path d="M426.7 224.7L429.0 225.1L428.8 225.9L426.9 225.5Z"/><path d="M428.6 222.8L430.2 224.2L429.8 224.7L428.4 223.4Z"/><path d="M430.0 226.5L431.9 227.3L431.3 227.6L430.2 227.3Z"/><path d="M440.0 235.0L441.2 236.2L441.0 237.0L440.0 236.4Z"/><path d="M441.2 237.8L442.3 238.8L441.9 239.0L441.2 238.4Z"/><path d="M442.9 240.8L443.6 241.2L443.3 241.6Z"/><path d="M434.9 246.0L437.0 247.4L439.5 249.0L440.8 250.3L440.2 250.7L437.9 249.3L436.1 247.8Z"/><path d="M460.4 241.0L462.3 240.6L462.8 241.8L461.5 242.4L460.4 241.8Z"/><path d="M462.8 239.0L465.3 238.4L465.7 239.4L463.4 239.6Z"/><path d="M339.0 249.9L339.7 249.5L340.3 249.5L341.2 250.9L340.7 251.1L339.7 253.2L339.0 255.0L339.3 257.3L338.6 258.6L339.7 260.3L340.5 262.5L341.2 264.2L342.0 266.8L343.3 271.2L389.5 290.1L415.3 267.9L415.3 264.6L415.3 262.9L414.6 260.7L414.4 258.2L413.8 256.7L412.7 255.5L411.5 254.0L410.0 252.3L409.8 250.7L407.9 250.5L407.2 248.8L406.0 247.0L404.7 245.6L402.8 244.4L401.5 243.4L401.1 241.8L400.7 239.8L399.8 238.4L399.6 236.4L398.2 234.7L396.9 234.7L396.1 233.1L396.3 231.5L395.4 229.8L394.8 228.0L394.2 227.4L393.5 228.6L392.7 230.7L392.5 232.9L392.3 235.0L392.2 237.4L392.0 239.0L391.0 240.6L389.9 241.2L388.2 240.4L386.3 239.2L384.4 237.8L382.5 236.8L380.9 235.6L381.1 234.5L381.9 233.3L383.0 232.3L383.6 230.6L382.8 229.8L381.1 230.4L379.2 229.8L377.3 229.4L375.4 229.0L374.1 228.6L372.8 230.2L371.4 230.7L370.7 231.9L369.7 233.9L369.4 235.6L367.8 235.4L366.7 236.4L365.9 234.5L364.6 233.5L362.9 234.3L361.8 235.0L360.4 236.6L359.7 238.2L358.5 239.0L357.6 240.0L356.4 239.8L355.7 241.6L355.3 243.0L354.4 244.4L353.0 245.2L350.9 245.8L349.2 246.4L347.3 247.2L345.2 247.2L343.7 248.0L342.0 249.0L341.2 249.5Z"/><path d="M370.5 228.8L373.4 228.4L373.0 229.6L370.9 229.6Z"/><path d="M224.8 182.9L227.1 182.9L226.3 183.4L225.1 183.4Z"/><circle cx="6.7" cy="175.8" r="1.0"/><circle cx="7.6" cy="179.0" r="0.7"/><circle cx="7.6" cy="180.3" r="0.6"/><circle cx="10.5" cy="181.8" r="0.6"/><circle cx="6.3" cy="183.8" r="0.5"/><circle cx="4.2" cy="173.6" r="0.5"/><circle cx="0.4" cy="171.6" r="0.5"/><circle cx="3.8" cy="172.0" r="0.4"/><circle cx="6.8" cy="177.4" r="0.5"/><circle cx="219.5" cy="155.8" r="0.5"/><circle cx="198.2" cy="218.6" r="0.7"/><circle cx="198.9" cy="216.7" r="0.5"/><circle cx="228.9" cy="248.0" r="1.0"/><circle cx="232.9" cy="246.2" r="0.8"/><circle cx="205.8" cy="229.4" r="0.6"/><circle cx="263.1" cy="199.0" r="0.3"/><circle cx="78.7" cy="178.0" r="0.6"/><circle cx="77.1" cy="174.8" r="0.5"/><circle cx="93.9" cy="151.8" r="0.6"/><circle cx="92.0" cy="150.9" r="0.6"/><circle cx="91.2" cy="141.2" r="0.5"/><circle cx="169.1" cy="127.6" r="0.6"/><circle cx="164.9" cy="126.4" r="0.3"/><circle cx="75.1" cy="129.6" r="0.5"/><circle cx="299.6" cy="184.4" r="0.6"/><circle cx="299.8" cy="182.5" r="0.5"/><circle cx="379.0" cy="192.7" r="0.6"/><circle cx="398.6" cy="181.3" r="0.5"/><circle cx="400.5" cy="177.8" r="0.4"/><circle cx="439.7" cy="233.5" r="0.4"/><circle cx="443.3" cy="238.8" r="0.4"/><circle cx="445.2" cy="244.8" r="0.4"/><circle cx="427.5" cy="228.0" r="0.3"/><circle cx="176.5" cy="133.1" r="0.7"/><circle cx="173.8" cy="125.9" r="0.5"/><circle cx="379.2" cy="218.8" r="1.2"/><circle cx="364.4" cy="221.5" r="0.5"/><circle cx="369.7" cy="221.9" r="0.4"/><circle cx="373.4" cy="220.9" r="0.7"/><circle cx="386.3" cy="222.6" r="0.4"/><circle cx="365.9" cy="207.8" r="0.6"/><circle cx="359.9" cy="210.6" r="0.9"/><circle cx="363.7" cy="198.8" r="0.4"/><circle cx="370.1" cy="150.7" r="0.5"/><circle cx="366.3" cy="154.8" r="0.7"/><circle cx="359.5" cy="159.2" r="0.4"/><circle cx="363.9" cy="139.6" r="0.7"/><circle cx="369.4" cy="137.3" r="0.4"/><circle cx="324.3" cy="227.1" r="0.3"/><circle cx="110.2" cy="55.8" r="0.7"/><circle cx="121.2" cy="62.5" r="0.7"/><circle cx="117.8" cy="67.4" r="0.6"/><circle cx="111.3" cy="72.8" r="0.7"/><circle cx="109.8" cy="72.8" r="0.6"/><circle cx="111.7" cy="76.3" r="0.5"/><circle cx="115.0" cy="84.0" r="0.5"/><circle cx="121.0" cy="94.9" r="0.4"/><circle cx="151.1" cy="133.8" r="0.4"/><circle cx="126.3" cy="126.4" r="0.6"/><circle cx="129.2" cy="124.9" r="0.7"/><circle cx="131.3" cy="124.2" r="0.4"/><circle cx="162.6" cy="62.9" r="0.6"/><circle cx="155.0" cy="75.6" r="0.4"/><circle cx="166.2" cy="69.2" r="0.8"/><circle cx="151.4" cy="81.0" r="0.4"/><circle cx="418.0" cy="96.1" r="0.5"/><circle cx="412.9" cy="104.5" r="0.4"/><circle cx="404.5" cy="111.1" r="0.5"/><circle cx="401.8" cy="112.4" r="0.4"/><circle cx="388.7" cy="118.1" r="0.3"/><circle cx="392.0" cy="110.5" r="0.4"/><circle cx="84.9" cy="50.0" r="0.3"/></g><g fill="#aad3df"><path d="M178.8 120.9L181.4 121.2L183.5 120.7L186.2 118.9L189.1 118.9L190.6 118.9L192.3 119.9L194.4 121.2L196.6 121.7L199.1 121.5L202.0 120.4L202.7 119.4L202.3 117.4L200.4 116.1L198.7 115.0L196.5 112.9L194.6 111.9L193.0 110.5L191.7 111.1L190.2 111.6L189.1 112.4L187.3 112.4L186.8 110.5L185.2 110.0L187.2 108.9L186.4 108.1L184.3 107.0L182.8 106.7L181.4 107.5L180.5 109.4L179.9 110.5L179.7 111.6L178.2 112.4L177.8 114.2L176.7 115.8L176.5 117.4L176.7 118.9L177.1 119.9Z"/><path d="M190.8 110.2L193.0 110.0L194.9 108.3L196.3 106.7L198.0 105.3L196.1 105.3L194.6 105.9L192.5 106.7L190.6 107.5L189.8 108.9Z"/><path d="M174.2 122.7L175.8 121.6L178.6 121.5L179.2 122.2L176.7 123.0L174.8 123.2Z"/><path d="M217.0 107.2L214.7 108.6L213.4 109.7L212.8 111.9L213.8 114.2L213.9 116.3L215.3 118.4L216.4 119.9L217.6 121.7L218.9 123.2L217.6 124.4L217.2 126.2L216.4 127.9L216.6 129.8L218.9 130.5L220.8 131.7L223.4 131.9L225.9 131.5L226.1 130.0L225.7 127.4L224.6 125.7L225.5 124.7L224.2 123.2L223.8 121.2L223.4 119.4L224.2 118.4L223.2 117.1L221.2 116.1L221.0 114.2L219.3 112.9L220.2 112.1L221.2 110.5L223.8 110.0L224.6 107.2L224.2 105.9L220.8 105.3L218.5 106.4Z"/><path d="M234.3 108.9L236.4 107.8L237.7 109.4L236.7 112.1L235.2 111.3L234.5 110.2Z"/><path d="M320.7 91.9L322.6 92.2L325.3 89.7L327.4 87.8L329.3 85.9L331.2 82.3L331.7 79.0L330.6 80.0L329.3 83.0L326.8 85.9L324.5 88.8L322.2 90.9Z"/><path d="M263.1 107.5L266.0 107.0L269.8 107.0L273.6 105.9L274.0 107.0L270.8 108.3L266.9 108.6L264.7 109.4Z"/><path d="M183.9 207.9L185.1 206.6L186.8 206.4L188.1 207.0L188.7 208.7L187.7 210.4L186.6 211.9L184.9 211.4L183.7 210.0Z"/><path d="M178.8 213.3L179.7 213.5L180.1 216.9L181.4 219.2L182.6 222.2L181.6 223.4L180.7 221.3L179.6 218.4L178.8 216.1Z"/><path d="M187.9 225.1L189.2 225.7L189.4 229.0L190.4 232.9L190.0 234.5L189.1 232.9L188.5 229.0Z"/><path d="M180.5 60.9L182.0 58.2L184.3 58.6L185.8 60.2L185.2 62.1L182.8 63.6Z"/><path d="M188.9 53.8L190.8 52.1L192.3 53.8L191.5 57.8L190.4 58.6L189.2 57.4Z"/><path d="M147.1 68.1L149.2 66.3L150.1 67.0L149.3 68.8L147.8 69.6Z"/><path d="M320.0 181.7L321.9 182.9L321.5 183.3L319.8 182.3Z"/></g><g fill="none" stroke="#d8bfd2" stroke-width="0.8" stroke-linejoin="round"><path d="M120.1 115.3L123.5 117.1L126.3 117.6L129.6 117.9"/><path d="M106.6 118.9L107.9 118.7L111.2 119.4L110.4 121.5L110.2 124.7L109.6 126.4L110.2 128.4L109.2 130.0L109.4 130.8"/><path d="M128.2 93.7L131.1 96.1L133.0 97.0L135.3 98.4L137.9 99.9L137.9 103.9L136.4 104.5L134.9 107.5L136.8 108.6L136.4 111.1L137.8 114.2"/><path d="M130.0 92.8L133.0 92.5L134.7 94.6"/><path d="M137.2 86.9L136.4 90.3L134.7 94.6L135.3 98.4"/><path d="M139.8 81.7L142.3 82.0"/><path d="M150.5 84.9L151.2 89.4L152.0 94.0L154.8 96.1L159.2 98.4"/><path d="M137.9 103.9L141.6 103.9L148.2 104.2L149.7 100.8L146.5 96.4L152.0 94.0"/><path d="M149.7 100.8L152.0 99.9L155.8 101.1L159.2 98.4L163.4 98.7L166.6 99.9L169.1 95.5L168.3 92.5L168.2 84.9L166.8 83.3L160.9 83.3"/><path d="M168.2 84.9L172.5 84.0L174.0 79.0L163.6 77.7"/><path d="M164.9 72.4L169.7 71.7L175.4 72.4L176.7 65.9"/><path d="M174.0 79.0L177.1 77.3L175.4 72.4"/><path d="M177.1 77.3L182.4 78.7L184.3 85.3L183.3 90.6"/><path d="M168.3 92.5L174.8 91.9L181.4 93.1L183.3 90.6L188.1 90.0L190.9 95.8L195.7 97.3L199.5 98.4L198.9 103.3L196.1 105.3"/><path d="M166.6 99.9L165.7 101.6L170.1 103.1L174.0 102.2L178.6 104.2L180.5 107.0L177.1 109.7L179.7 110.2"/><path d="M174.0 102.2L177.1 109.7"/><path d="M155.8 102.8L154.3 105.9"/><path d="M155.8 102.8L159.2 103.3L162.4 101.3L165.7 101.6"/><path d="M165.7 101.6L163.4 107.8L159.6 108.3L155.8 108.9L154.3 105.9"/><path d="M141.6 104.7L143.4 105.9L146.7 105.3L149.5 107.0L154.3 105.9"/><path d="M149.3 109.7L152.9 108.9L154.3 107.2"/><path d="M153.3 111.3L159.6 111.1"/><path d="M160.2 111.3L160.6 115.8L158.7 117.6"/><path d="M163.4 107.8L166.2 112.4L166.6 113.7L171.0 114.5L175.8 113.7L177.8 114.4"/><path d="M166.6 113.7L167.2 116.3L166.1 118.1L167.2 120.7"/><path d="M161.5 124.7L163.4 122.0L167.0 120.7L173.3 119.7L173.5 121.7"/><path d="M173.3 119.7L176.7 118.9"/><path d="M160.6 117.6L162.6 119.2L163.4 122.0"/><path d="M136.8 108.6L140.6 108.6L143.4 107.0L141.6 104.7"/><path d="M145.2 67.4L146.9 61.7L146.9 54.6L148.2 47.4L151.1 40.7L153.7 31.2L157.9 26.1L162.1 23.5L165.3 25.1L171.0 24.6L173.8 18.6L177.7 19.2L178.6 20.8L182.0 19.2"/><path d="M162.1 23.5L168.2 31.2L170.1 39.4"/><path d="M178.6 20.8L178.2 24.0L180.5 29.7L179.6 34.6L180.5 40.7L179.9 44.3L181.4 49.1L183.3 52.5L179.6 59.0L176.3 61.7"/><path d="M120.1 135.7L120.3 138.2L121.2 142.3L116.7 143.9L107.0 150.9L107.0 152.2"/><path d="M107.0 152.2L107.0 155.8L100.7 155.8L100.7 161.0L98.8 165.6L91.2 165.6"/><path d="M107.0 153.0L114.4 157.9L110.8 157.9L113.0 175.4L101.7 177.2L100.3 178.8L92.2 175.8"/><path d="M114.4 157.9L125.8 166.8L131.5 169.8L134.9 169.2L146.3 161.0"/><path d="M139.8 131.5L139.3 137.1L137.8 140.5L141.6 146.5L142.5 157.9L146.3 161.0L152.0 162.1L169.1 169.2"/><path d="M171.0 143.7L171.0 164.1L193.6 164.1"/><path d="M169.1 169.2L169.1 168.2L171.0 168.2L171.0 164.1"/><path d="M169.1 169.2L166.2 180.1L165.3 183.1L168.2 190.4L175.8 188.9L186.2 187.9L188.1 188.9"/><path d="M188.1 188.9L190.9 183.1L192.8 179.5L196.8 172.2"/><path d="M192.8 179.5L196.6 179.2L199.9 178.8L204.1 183.1"/><path d="M204.1 183.1L205.2 186.0L207.7 189.3L214.5 191.8L209.0 197.5L203.3 199.4L201.4 201.7L201.4 208.5L202.3 210.2"/><path d="M203.3 199.4L198.6 200.3L191.9 198.4L190.0 198.3L188.1 192.5L188.1 188.9"/><path d="M190.0 198.3L188.1 205.1L188.1 208.9L194.8 213.7L198.0 215.9"/><path d="M188.1 199.0L182.4 200.0L180.5 204.1L179.7 209.7L181.4 211.6L180.1 215.6L181.4 222.2L186.6 225.3L189.1 229.2L200.3 226.9"/><path d="M181.3 237.0L186.2 239.8L185.2 243.8L183.0 250.7L184.3 255.0L184.3 259.9L186.0 259.9"/><path d="M165.3 241.6L171.6 241.4L176.7 238.8L181.3 237.0"/><path d="M171.6 241.4L175.2 245.8L179.4 250.1L183.0 250.7"/><path d="M179.4 250.1L173.8 255.2L171.0 257.6L161.5 255.7L161.5 263.3L154.8 263.7"/><path d="M161.5 255.7L161.5 249.9L163.4 241.8L165.3 241.6"/><path d="M145.9 240.4L150.1 240.6L161.5 241.4L168.0 241.0"/><path d="M146.9 218.4L154.8 218.4L157.1 222.4L160.4 220.3L164.9 220.9L165.3 228.0L169.1 228.0"/><path d="M169.1 229.0L165.3 231.9L165.3 238.4L168.0 241.0"/><path d="M169.1 228.0L177.7 223.2L181.4 222.8"/><path d="M169.1 228.0L171.9 229.6L177.7 228.0L178.0 223.4"/><path d="M176.7 238.8L176.7 230.9L181.3 237.0"/><path d="M146.9 216.5L148.2 215.9L153.9 212.7L156.8 208.9L157.7 203.2L158.7 200.3L166.2 199.0L171.9 197.1L175.6 197.3L182.4 200.0"/><path d="M151.1 195.2L152.9 192.7L158.7 189.8L165.3 186.0L168.2 190.4"/><path d="M139.7 198.3L141.7 195.0L145.3 194.2L147.1 190.2L149.2 186.9L151.1 182.3L150.5 181.9"/><path d="M142.1 202.6L145.0 202.8L148.6 202.8L153.9 203.2L154.8 200.3L151.1 195.2"/><path d="M145.0 202.8L148.2 204.5L150.1 211.6L145.3 214.6"/><path d="M128.6 195.0L128.6 189.8L130.3 184.6L133.0 180.7L136.8 182.1L142.5 181.5L149.3 180.7L152.9 168.2L152.0 162.1"/><path d="M131.5 175.4L130.2 177.6L123.9 178.4L126.0 181.5L127.3 183.6L130.3 184.6"/><path d="M123.9 178.4L119.7 178.4L113.0 185.0"/><path d="M117.6 186.2L123.3 185.8L125.2 186.0L127.7 184.2"/><path d="M125.2 186.0L125.8 195.4"/><path d="M126.5 195.2L126.5 189.8L125.2 186.0"/><path d="M117.6 197.3L118.2 191.8L118.4 188.9L117.6 186.2"/><path d="M109.2 198.6L107.7 194.6L107.9 192.7L107.3 187.7L113.0 186.9L117.6 186.2"/><path d="M98.2 189.4L102.6 187.9L103.2 191.2L101.8 194.0"/><path d="M103.2 191.2L107.9 192.7"/><path d="M107.3 187.7L101.7 183.3L97.5 182.9L91.8 183.3"/><path d="M97.5 182.9L97.5 184.6L95.0 186.2"/><path d="M100.3 178.8L101.7 183.3"/><path d="M188.5 144.3L189.8 148.3"/><path d="M204.8 175.4L207.1 173.4L213.8 174.2L222.3 170.2L229.3 164.1L228.4 162.7L230.7 158.1"/><path d="M222.3 170.2L224.4 175.0"/><path d="M221.5 159.4L228.4 162.7"/><path d="M189.9 148.7L192.8 148.3L195.7 146.1L193.8 143.9L198.0 142.3L203.3 144.8L208.4 149.0L211.8 149.2L215.5 150.5"/><path d="M197.2 139.6L201.4 137.3L202.0 132.4L204.1 131.0"/><path d="M214.7 147.2L214.1 144.1L210.9 140.5L209.8 133.8L208.6 130.8"/><path d="M204.1 131.0L208.6 130.8"/><path d="M191.9 134.1L193.0 131.7L197.6 131.9L204.1 131.0"/><path d="M208.6 130.8L207.7 126.4L206.3 123.7L206.1 121.2L202.3 120.2"/><path d="M199.3 115.3L204.2 115.8L209.0 117.6L211.8 119.2L215.8 119.4"/><path d="M208.6 124.7L211.3 126.7L215.3 126.7L216.4 127.9"/><path d="M225.9 130.5L231.8 128.8L238.4 132.2L239.8 134.5L238.4 138.9L239.2 147.6L242.2 148.5L243.2 153.3L240.5 157.5"/><path d="M192.3 141.9L191.1 139.8L193.0 137.8"/><path d="M190.9 141.9L190.0 148.3"/><path d="M217.0 107.2L215.6 104.2L211.8 101.3L213.8 95.5L220.4 92.5L228.0 94.6L233.7 94.0L239.4 94.6L240.3 90.9L238.4 87.8L239.4 84.6L247.9 82.3L254.6 80.0L263.1 84.6L267.9 83.6L269.8 87.8L275.5 94.6L282.1 94.0L285.9 98.4L289.4 99.6"/><path d="M223.8 119.4L229.9 120.7L229.9 110.8L234.8 109.4L239.4 112.7L241.3 115.0L245.9 114.8L249.1 116.3L248.9 118.9L253.8 122.2L258.4 118.1L263.1 117.6L264.9 115.8L274.2 116.9L276.1 118.7L275.9 111.1L280.4 110.2L281.4 105.0L286.1 105.6L286.3 99.6L289.4 99.6"/><path d="M229.9 120.7L232.8 120.7L237.5 118.4L240.3 121.5L245.1 125.7L250.0 128.8"/><path d="M239.8 134.5L246.1 132.9L250.0 130.3L252.7 131.2L257.4 128.6L259.4 131.9L265.8 130.8"/><path d="M255.5 125.2L263.1 125.2L266.0 124.4"/><path d="M263.7 124.9L267.1 122.5L269.8 121.5L276.1 118.7"/><path d="M239.2 147.6L249.5 147.4L252.3 143.9L255.4 143.0L257.1 139.6L258.6 137.5L259.4 133.4L261.2 131.5L265.2 131.0"/><path d="M253.1 160.4L256.5 159.6L258.4 159.2L257.1 153.9L260.3 151.5L263.1 147.4L265.0 145.0L266.6 142.1L265.0 137.1L271.3 134.8"/><path d="M271.3 134.8L274.5 138.2L273.4 141.6L273.6 144.8L277.4 146.8"/><path d="M277.4 146.8L275.5 149.8L282.1 152.8L290.9 154.8L291.1 152.0"/><path d="M277.4 146.8L285.0 150.5L291.1 152.0"/><path d="M292.2 153.5L298.3 152.0"/><path d="M291.1 152.0L298.3 152.0L303.0 148.7L308.4 150.9"/><path d="M292.2 164.1L291.6 160.0L292.6 155.8L298.3 157.9L298.9 162.1L299.1 166.6"/><path d="M299.1 166.6L300.8 161.0L302.5 159.0L304.0 154.8L308.4 150.9"/><path d="M308.4 150.9L310.6 156.9L309.3 160.0L311.6 164.1L315.8 165.2L317.3 163.3L321.1 162.5L325.9 163.1L328.7 165.0"/><path d="M313.7 167.4L309.3 171.2L311.2 176.2L310.8 183.1L312.0 186.9L310.6 187.9"/><path d="M315.8 165.2L313.7 167.4L315.4 169.2L315.8 173.2L321.1 172.2L323.9 175.2L323.9 179.5L319.2 179.3L318.1 181.1L319.0 184.4"/><path d="M317.3 163.3L320.3 166.6L322.4 170.6L326.0 174.2L327.8 178.2L327.9 179.3L324.9 185.6L322.0 187.1"/><path d="M323.9 179.5L327.9 179.3"/><path d="M313.7 194.6L316.9 196.0L317.5 195.2"/><path d="M290.3 99.3L295.4 109.7L305.9 117.1L314.8 117.4L323.0 119.9L331.5 117.9L336.3 115.0L342.0 111.3L346.8 106.7L351.1 106.4L348.6 103.3L345.2 97.3"/><path d="M290.3 99.3L298.3 95.5L309.7 90.9L310.6 94.0L317.3 96.1L324.9 96.1L329.6 99.0L341.0 96.4L345.2 97.3"/><path d="M345.2 97.3L350.5 88.1L353.4 86.9L361.9 87.8L365.8 97.6L371.8 100.2L372.4 103.6L379.0 101.9L376.6 111.1L372.4 111.3L371.6 117.9"/><path d="M289.4 99.6L290.3 99.3"/><path d="M359.9 123.9L362.9 121.5L367.1 119.7L369.5 117.9L371.6 117.9"/><path d="M363.1 129.6L365.2 128.1L367.5 127.4"/><path d="M265.2 131.0L267.1 131.7L271.3 134.8"/><path d="M265.8 130.8L263.7 124.9"/><path d="M391.4 211.9L391.4 224.4"/><path d="M331.7 203.0L334.4 204.7L339.1 204.5L342.9 203.2L344.9 198.8L347.3 199.0"/><path d="M359.1 224.7L361.2 224.6"/><path d="M1.9 204.1L4.2 199.4L8.2 197.1L7.6 194.0L9.5 190.8"/><path d="M8.2 197.1L9.9 199.0L10.5 204.1L13.3 204.1L16.2 203.4L14.8 195.6"/><path d="M16.2 203.4L20.0 202.6L20.9 196.2"/><path d="M20.0 202.6L23.8 202.6L25.5 199.0"/><path d="M-1.9 225.7L-0.6 227.8L5.7 231.9L9.1 232.9L9.5 238.4L12.7 238.4L14.2 241.8L13.3 245.8L18.1 250.5L19.0 254.0L19.8 257.3L21.3 260.5L17.5 262.9L14.1 267.2"/><path d="M4.6 250.3L6.3 245.0L12.9 245.4"/><path d="M4.6 250.3L12.4 260.3L17.1 261.4L19.8 257.3"/><path d="M-1.9 250.1L4.6 250.3"/><path d="M-1.9 204.1L1.9 204.1"/></g><g fill="none" stroke="#aad3df" stroke-width="1.1"><path d="M366.3 2.7L365.0 8.8L359.1 22.4L357.6 33.2L359.9 43.5L367.3 51.3"/></g></svg><svg width="469" height="266" style="position:absolute;left:0;top:0;overflow:hidden"><circle cx="-7.5" cy="184.3" r="9.2" fill="#f7f700" fill-opacity="0.88" stroke="#f7f700" stroke-opacity="0.6" stroke-width="1.6"/><circle cx="96.5" cy="189.8" r="9.2" fill="#f7f700" fill-opacity="0.88" stroke="#f7f700" stroke-opacity="0.6" stroke-width="1.6"/><circle cx="107.6" cy="183.3" r="9.2" fill="#9a9a9a" fill-opacity="0.88" stroke="#9a9a9a" stroke-opacity="0.6" stroke-width="1.6"/><circle cx="123.3" cy="196.2" r="9.2" fill="#f7f700" fill-opacity="0.88" stroke="#f7f700" stroke-opacity="0.6" stroke-width="1.6"/><circle cx="115.0" cy="196.7" r="9.2" fill="#f7f700" fill-opacity="0.88" stroke="#f7f700" stroke-opacity="0.6" stroke-width="1.6"/><circle cx="128.6" cy="133.0" r="9.2" fill="#f7f700" fill-opacity="0.88" stroke="#f7f700" stroke-opacity="0.6" stroke-width="1.6"/><circle cx="151.6" cy="184.4" r="9.2" fill="#ff1e1e" fill-opacity="0.88" stroke="#ff1e1e" stroke-opacity="0.6" stroke-width="1.6"/><circle cx="156.7" cy="114.0" r="9.2" fill="#8e2f7e" fill-opacity="0.88" stroke="#8e2f7e" stroke-opacity="0.6" stroke-width="1.6"/><circle cx="163.4" cy="117.4" r="9.2" fill="#ff1e1e" fill-opacity="0.88" stroke="#ff1e1e" stroke-opacity="0.6" stroke-width="1.6"/><circle cx="191.3" cy="143.3" r="9.2" fill="#9a9a9a" fill-opacity="0.88" stroke="#9a9a9a" stroke-opacity="0.6" stroke-width="1.6"/><circle cx="207.8" cy="139.5" r="9.2" fill="#f7f700" fill-opacity="0.88" stroke="#f7f700" stroke-opacity="0.6" stroke-width="1.6"/><circle cx="214.7" cy="148.4" r="9.2" fill="#f7f700" fill-opacity="0.88" stroke="#f7f700" stroke-opacity="0.6" stroke-width="1.6"/><circle cx="211.2" cy="158.7" r="9.2" fill="#9a9a9a" fill-opacity="0.88" stroke="#9a9a9a" stroke-opacity="0.6" stroke-width="1.6"/><circle cx="226.4" cy="159.4" r="9.2" fill="#f7f700" fill-opacity="0.88" stroke="#f7f700" stroke-opacity="0.6" stroke-width="1.6"/><circle cx="219.5" cy="155.3" r="9.2" fill="#f7f700" fill-opacity="0.88" stroke="#f7f700" stroke-opacity="0.6" stroke-width="1.6"/><circle cx="228.4" cy="157.4" r="9.2" fill="#9a9a9a" fill-opacity="0.88" stroke="#9a9a9a" stroke-opacity="0.6" stroke-width="1.6"/><circle cx="197.5" cy="165.0" r="9.2" fill="#f7f700" fill-opacity="0.88" stroke="#f7f700" stroke-opacity="0.6" stroke-width="1.6"/><circle cx="233.5" cy="129.6" r="9.2" fill="#f7f700" fill-opacity="0.88" stroke="#f7f700" stroke-opacity="0.6" stroke-width="1.6"/><circle cx="184.6" cy="177.5" r="9.2" fill="#c9f01a" fill-opacity="0.88" stroke="#c9f01a" stroke-opacity="0.6" stroke-width="1.6"/><circle cx="197.0" cy="190.4" r="9.2" fill="#22d422" fill-opacity="0.88" stroke="#22d422" stroke-opacity="0.6" stroke-width="1.6"/><circle cx="184.6" cy="206.3" r="9.2" fill="#9a9a9a" fill-opacity="0.88" stroke="#9a9a9a" stroke-opacity="0.6" stroke-width="1.6"/><circle cx="326.3" cy="104.8" r="9.2" fill="#9a9a9a" fill-opacity="0.88" stroke="#9a9a9a" stroke-opacity="0.6" stroke-width="1.6"/><circle cx="257.0" cy="95.5" r="9.2" fill="#ff1e1e" fill-opacity="0.88" stroke="#ff1e1e" stroke-opacity="0.6" stroke-width="1.6"/><circle cx="260.0" cy="118.0" r="9.2" fill="#ff1e1e" fill-opacity="0.88" stroke="#ff1e1e" stroke-opacity="0.6" stroke-width="1.6"/><circle cx="268.7" cy="116.2" r="9.2" fill="#ff1e1e" fill-opacity="0.88" stroke="#ff1e1e" stroke-opacity="0.6" stroke-width="1.6"/><circle cx="252.9" cy="121.0" r="9.2" fill="#ff1e1e" fill-opacity="0.88" stroke="#ff1e1e" stroke-opacity="0.6" stroke-width="1.6"/><circle cx="254.2" cy="127.2" r="9.2" fill="#ff1e1e" fill-opacity="0.88" stroke="#ff1e1e" stroke-opacity="0.6" stroke-width="1.6"/><circle cx="254.2" cy="137.5" r="9.2" fill="#ff1e1e" fill-opacity="0.88" stroke="#ff1e1e" stroke-opacity="0.6" stroke-width="1.6"/><circle cx="264.6" cy="143.7" r="9.2" fill="#f28a1e" fill-opacity="0.88" stroke="#f28a1e" stroke-opacity="0.6" stroke-width="1.6"/><circle cx="262.5" cy="138.2" r="9.2" fill="#f7f700" fill-opacity="0.88" stroke="#f7f700" stroke-opacity="0.6" stroke-width="1.6"/><circle cx="268.7" cy="149.9" r="9.2" fill="#6e3358" fill-opacity="0.88" stroke="#6e3358" stroke-opacity="0.6" stroke-width="1.6"/><circle cx="251.0" cy="158.9" r="9.2" fill="#ff1e1e" fill-opacity="0.88" stroke="#ff1e1e" stroke-opacity="0.6" stroke-width="1.6"/><circle cx="285.2" cy="152.0" r="9.2" fill="#ff7800" fill-opacity="0.88" stroke="#ff7800" stroke-opacity="0.6" stroke-width="1.6"/><circle cx="291.4" cy="163.0" r="9.2" fill="#8e2f7e" fill-opacity="0.88" stroke="#8e2f7e" stroke-opacity="0.6" stroke-width="1.6"/><circle cx="293.4" cy="160.2" r="9.2" fill="#8e2f7e" fill-opacity="0.88" stroke="#8e2f7e" stroke-opacity="0.6" stroke-width="1.6"/><circle cx="273.0" cy="172.6" r="9.2" fill="#ff1e1e" fill-opacity="0.88" stroke="#ff1e1e" stroke-opacity="0.6" stroke-width="1.6"/><circle cx="262.0" cy="171.2" r="9.2" fill="#ff1e1e" fill-opacity="0.88" stroke="#ff1e1e" stroke-opacity="0.6" stroke-width="1.6"/><circle cx="276.4" cy="182.2" r="9.2" fill="#f28a1e" fill-opacity="0.88" stroke="#f28a1e" stroke-opacity="0.6" stroke-width="1.6"/><circle cx="275.0" cy="193.9" r="9.2" fill="#f7f700" fill-opacity="0.88" stroke="#f7f700" stroke-opacity="0.6" stroke-width="1.6"/><circle cx="306.0" cy="174.5" r="9.2" fill="#f7f700" fill-opacity="0.88" stroke="#f7f700" stroke-opacity="0.6" stroke-width="1.6"/><circle cx="324.5" cy="166.2" r="9.2" fill="#f28a1e" fill-opacity="0.88" stroke="#f28a1e" stroke-opacity="0.6" stroke-width="1.6"/><circle cx="338.4" cy="162.2" r="9.2" fill="#f7f700" fill-opacity="0.88" stroke="#f7f700" stroke-opacity="0.6" stroke-width="1.6"/><circle cx="318.4" cy="172.0" r="9.2" fill="#f7f700" fill-opacity="0.88" stroke="#f7f700" stroke-opacity="0.6" stroke-width="1.6"/><circle cx="325.8" cy="186.6" r="9.2" fill="#f28a1e" fill-opacity="0.88" stroke="#f28a1e" stroke-opacity="0.6" stroke-width="1.6"/><circle cx="325.8" cy="218.9" r="9.2" fill="#f7f700" fill-opacity="0.88" stroke="#f7f700" stroke-opacity="0.6" stroke-width="1.6"/><circle cx="343.3" cy="124.9" r="9.2" fill="#f7f700" fill-opacity="0.88" stroke="#f7f700" stroke-opacity="0.6" stroke-width="1.6"/><circle cx="358.0" cy="120.2" r="9.2" fill="#ff1e1e" fill-opacity="0.88" stroke="#ff1e1e" stroke-opacity="0.6" stroke-width="1.6"/><circle cx="354.2" cy="145.0" r="9.2" fill="#22d422" fill-opacity="0.88" stroke="#22d422" stroke-opacity="0.6" stroke-width="1.6"/><text transform="translate(96.50,192.10) scale(0.9,1)" x="0" y="0" text-anchor="middle" font-family="Liberation Sans" font-weight="bold" font-size="8.8" fill="#262626" stroke="#fff" stroke-width="2.4" stroke-linejoin="round" paint-order="stroke">74</text><text transform="translate(107.60,185.60) scale(0.9,1)" x="0" y="0" text-anchor="middle" font-family="Liberation Sans" font-weight="bold" font-size="8.8" fill="#262626" stroke="#fff" stroke-width="2.4" stroke-linejoin="round" paint-order="stroke">N/A</text><text transform="translate(123.30,198.50) scale(0.9,1)" x="0" y="0" text-anchor="middle" font-family="Liberation Sans" font-weight="bold" font-size="8.8" fill="#262626" stroke="#fff" stroke-width="2.4" stroke-linejoin="round" paint-order="stroke">95</text><text transform="translate(115.00,199.00) scale(0.9,1)" x="0" y="0" text-anchor="middle" font-family="Liberation Sans" font-weight="bold" font-size="8.8" fill="#262626" stroke="#fff" stroke-width="2.4" stroke-linejoin="round" paint-order="stroke">83</text><text transform="translate(128.60,135.30) scale(0.9,1)" x="0" y="0" text-anchor="middle" font-family="Liberation Sans" font-weight="bold" font-size="8.8" fill="#262626" stroke="#fff" stroke-width="2.4" stroke-linejoin="round" paint-order="stroke">62</text><text transform="translate(151.60,186.70) scale(0.9,1)" x="0" y="0" text-anchor="middle" font-family="Liberation Sans" font-weight="bold" font-size="8.8" fill="#262626" stroke="#fff" stroke-width="2.4" stroke-linejoin="round" paint-order="stroke">175</text><text transform="translate(156.70,116.30) scale(0.9,1)" x="0" y="0" text-anchor="middle" font-family="Liberation Sans" font-weight="bold" font-size="8.8" fill="#262626" stroke="#fff" stroke-width="2.4" stroke-linejoin="round" paint-order="stroke">210</text><text transform="translate(163.40,119.70) scale(0.9,1)" x="0" y="0" text-anchor="middle" font-family="Liberation Sans" font-weight="bold" font-size="8.8" fill="#262626" stroke="#fff" stroke-width="2.4" stroke-linejoin="round" paint-order="stroke">194</text><text transform="translate(191.30,145.60) scale(0.9,1)" x="0" y="0" text-anchor="middle" font-family="Liberation Sans" font-weight="bold" font-size="8.8" fill="#262626" stroke="#fff" stroke-width="2.4" stroke-linejoin="round" paint-order="stroke">N/A</text><text transform="translate(207.80,141.80) scale(0.9,1)" x="0" y="0" text-anchor="middle" font-family="Liberation Sans" font-weight="bold" font-size="8.8" fill="#262626" stroke="#fff" stroke-width="2.4" stroke-linejoin="round" paint-order="stroke">64</text><text transform="translate(214.70,150.70) scale(0.9,1)" x="0" y="0" text-anchor="middle" font-family="Liberation Sans" font-weight="bold" font-size="8.8" fill="#262626" stroke="#fff" stroke-width="2.4" stroke-linejoin="round" paint-order="stroke">76</text><text transform="translate(211.20,161.00) scale(0.9,1)" x="0" y="0" text-anchor="middle" font-family="Liberation Sans" font-weight="bold" font-size="8.8" fill="#262626" stroke="#fff" stroke-width="2.4" stroke-linejoin="round" paint-order="stroke">N/A</text><text transform="translate(226.40,161.70) scale(0.9,1)" x="0" y="0" text-anchor="middle" font-family="Liberation Sans" font-weight="bold" font-size="8.8" fill="#262626" stroke="#fff" stroke-width="2.4" stroke-linejoin="round" paint-order="stroke">98</text><text transform="translate(219.50,157.60) scale(0.9,1)" x="0" y="0" text-anchor="middle" font-family="Liberation Sans" font-weight="bold" font-size="8.8" fill="#262626" stroke="#fff" stroke-width="2.4" stroke-linejoin="round" paint-order="stroke">58</text><text transform="translate(228.40,159.70) scale(0.9,1)" x="0" y="0" text-anchor="middle" font-family="Liberation Sans" font-weight="bold" font-size="8.8" fill="#262626" stroke="#fff" stroke-width="2.4" stroke-linejoin="round" paint-order="stroke">N/A</text><text transform="translate(197.50,167.30) scale(0.9,1)" x="0" y="0" text-anchor="middle" font-family="Liberation Sans" font-weight="bold" font-size="8.8" fill="#262626" stroke="#fff" stroke-width="2.4" stroke-linejoin="round" paint-order="stroke">90</text><text transform="translate(233.50,131.90) scale(0.9,1)" x="0" y="0" text-anchor="middle" font-family="Liberation Sans" font-weight="bold" font-size="8.8" fill="#262626" stroke="#fff" stroke-width="2.4" stroke-linejoin="round" paint-order="stroke">95</text><text transform="translate(184.60,179.80) scale(0.9,1)" x="0" y="0" text-anchor="middle" font-family="Liberation Sans" font-weight="bold" font-size="8.8" fill="#262626" stroke="#fff" stroke-width="2.4" stroke-linejoin="round" paint-order="stroke">60</text><text transform="translate(197.00,192.70) scale(0.9,1)" x="0" y="0" text-anchor="middle" font-family="Liberation Sans" font-weight="bold" font-size="8.8" fill="#262626" stroke="#fff" stroke-width="2.4" stroke-linejoin="round" paint-order="stroke">140</text><text transform="translate(184.60,208.60) scale(0.9,1)" x="0" y="0" text-anchor="middle" font-family="Liberation Sans" font-weight="bold" font-size="8.8" fill="#262626" stroke="#fff" stroke-width="2.4" stroke-linejoin="round" paint-order="stroke">N/A</text><text transform="translate(326.30,107.10) scale(0.9,1)" x="0" y="0" text-anchor="middle" font-family="Liberation Sans" font-weight="bold" font-size="8.8" fill="#262626" stroke="#fff" stroke-width="2.4" stroke-linejoin="round" paint-order="stroke">N/A</text><text transform="translate(259.60,117.40) scale(0.9,1)" x="0" y="0" text-anchor="middle" font-family="Liberation Sans" font-weight="bold" font-size="8.8" fill="#262626" stroke="#fff" stroke-width="2.4" stroke-linejoin="round" paint-order="stroke">1</text><text transform="translate(268.70,118.50) scale(0.9,1)" x="0" y="0" text-anchor="middle" font-family="Liberation Sans" font-weight="bold" font-size="8.8" fill="#262626" stroke="#fff" stroke-width="2.4" stroke-linejoin="round" paint-order="stroke">175</text><text transform="translate(252.90,123.30) scale(0.9,1)" x="0" y="0" text-anchor="middle" font-family="Liberation Sans" font-weight="bold" font-size="8.8" fill="#262626" stroke="#fff" stroke-width="2.4" stroke-linejoin="round" paint-order="stroke">186</text><text transform="translate(254.20,129.50) scale(0.9,1)" x="0" y="0" text-anchor="middle" font-family="Liberation Sans" font-weight="bold" font-size="8.8" fill="#262626" stroke="#fff" stroke-width="2.4" stroke-linejoin="round" paint-order="stroke">197</text><text transform="translate(254.20,139.80) scale(0.9,1)" x="0" y="0" text-anchor="middle" font-family="Liberation Sans" font-weight="bold" font-size="8.8" fill="#262626" stroke="#fff" stroke-width="2.4" stroke-linejoin="round" paint-order="stroke">126</text><text transform="translate(264.60,146.00) scale(0.9,1)" x="0" y="0" text-anchor="middle" font-family="Liberation Sans" font-weight="bold" font-size="8.8" fill="#262626" stroke="#fff" stroke-width="2.4" stroke-linejoin="round" paint-order="stroke">125</text><text transform="translate(262.50,140.50) scale(0.9,1)" x="0" y="0" text-anchor="middle" font-family="Liberation Sans" font-weight="bold" font-size="8.8" fill="#262626" stroke="#fff" stroke-width="2.4" stroke-linejoin="round" paint-order="stroke">64</text><text transform="translate(268.70,152.20) scale(0.9,1)" x="0" y="0" text-anchor="middle" font-family="Liberation Sans" font-weight="bold" font-size="8.8" fill="#262626" stroke="#fff" stroke-width="2.4" stroke-linejoin="round" paint-order="stroke">395</text><text transform="translate(251.00,161.20) scale(0.9,1)" x="0" y="0" text-anchor="middle" font-family="Liberation Sans" font-weight="bold" font-size="8.8" fill="#262626" stroke="#fff" stroke-width="2.4" stroke-linejoin="round" paint-order="stroke">176</text><text transform="translate(285.20,154.30) scale(0.9,1)" x="0" y="0" text-anchor="middle" font-family="Liberation Sans" font-weight="bold" font-size="8.8" fill="#262626" stroke="#fff" stroke-width="2.4" stroke-linejoin="round" paint-order="stroke">149</text><text transform="translate(291.40,165.30) scale(0.9,1)" x="0" y="0" text-anchor="middle" font-family="Liberation Sans" font-weight="bold" font-size="8.8" fill="#262626" stroke="#fff" stroke-width="2.4" stroke-linejoin="round" paint-order="stroke">229</text><text transform="translate(293.40,162.50) scale(0.9,1)" x="0" y="0" text-anchor="middle" font-family="Liberation Sans" font-weight="bold" font-size="8.8" fill="#262626" stroke="#fff" stroke-width="2.4" stroke-linejoin="round" paint-order="stroke">208</text><text transform="translate(273.00,174.90) scale(0.9,1)" x="0" y="0" text-anchor="middle" font-family="Liberation Sans" font-weight="bold" font-size="8.8" fill="#262626" stroke="#fff" stroke-width="2.4" stroke-linejoin="round" paint-order="stroke">153</text><text transform="translate(262.00,173.50) scale(0.9,1)" x="0" y="0" text-anchor="middle" font-family="Liberation Sans" font-weight="bold" font-size="8.8" fill="#262626" stroke="#fff" stroke-width="2.4" stroke-linejoin="round" paint-order="stroke">168</text><text transform="translate(276.40,184.50) scale(0.9,1)" x="0" y="0" text-anchor="middle" font-family="Liberation Sans" font-weight="bold" font-size="8.8" fill="#262626" stroke="#fff" stroke-width="2.4" stroke-linejoin="round" paint-order="stroke">134</text><text transform="translate(275.00,196.20) scale(0.9,1)" x="0" y="0" text-anchor="middle" font-family="Liberation Sans" font-weight="bold" font-size="8.8" fill="#262626" stroke="#fff" stroke-width="2.4" stroke-linejoin="round" paint-order="stroke">66</text><text transform="translate(306.00,176.80) scale(0.9,1)" x="0" y="0" text-anchor="middle" font-family="Liberation Sans" font-weight="bold" font-size="8.8" fill="#262626" stroke="#fff" stroke-width="2.4" stroke-linejoin="round" paint-order="stroke">76</text><text transform="translate(324.50,168.50) scale(0.9,1)" x="0" y="0" text-anchor="middle" font-family="Liberation Sans" font-weight="bold" font-size="8.8" fill="#262626" stroke="#fff" stroke-width="2.4" stroke-linejoin="round" paint-order="stroke">123</text><text transform="translate(338.40,164.50) scale(0.9,1)" x="0" y="0" text-anchor="middle" font-family="Liberation Sans" font-weight="bold" font-size="8.8" fill="#262626" stroke="#fff" stroke-width="2.4" stroke-linejoin="round" paint-order="stroke">72</text><text transform="translate(318.40,174.30) scale(0.9,1)" x="0" y="0" text-anchor="middle" font-family="Liberation Sans" font-weight="bold" font-size="8.8" fill="#262626" stroke="#fff" stroke-width="2.4" stroke-linejoin="round" paint-order="stroke">75</text><text transform="translate(325.80,188.90) scale(0.9,1)" x="0" y="0" text-anchor="middle" font-family="Liberation Sans" font-weight="bold" font-size="8.8" fill="#262626" stroke="#fff" stroke-width="2.4" stroke-linejoin="round" paint-order="stroke">110</text><text transform="translate(325.80,221.20) scale(0.9,1)" x="0" y="0" text-anchor="middle" font-family="Liberation Sans" font-weight="bold" font-size="8.8" fill="#262626" stroke="#fff" stroke-width="2.4" stroke-linejoin="round" paint-order="stroke">57</text><text transform="translate(343.30,127.20) scale(0.9,1)" x="0" y="0" text-anchor="middle" font-family="Liberation Sans" font-weight="bold" font-size="8.8" fill="#262626" stroke="#fff" stroke-width="2.4" stroke-linejoin="round" paint-order="stroke">58</text><text transform="translate(358.00,122.50) scale(0.9,1)" x="0" y="0" text-anchor="middle" font-family="Liberation Sans" font-weight="bold" font-size="8.8" fill="#262626" stroke="#fff" stroke-width="2.4" stroke-linejoin="round" paint-order="stroke">163</text><text transform="translate(354.20,147.30) scale(0.9,1)" x="0" y="0" text-anchor="middle" font-family="Liberation Sans" font-weight="bold" font-size="8.8" fill="#262626" stroke="#fff" stroke-width="2.4" stroke-linejoin="round" paint-order="stroke">32</text></svg></div><div style="position:absolute;left:241.8px;top:54.9px;width:107.4px;height:89px;background:#fff;border-radius:6px;box-shadow:0 1px 3px rgba(0,0,0,0.35)"></div><div style="position:absolute;left:267.2px;top:143.9px;width:13px;height:8px;overflow:hidden"><div style="position:absolute;left:1.9px;top:-4.6px;width:9.2px;height:9.2px;background:#fff;transform:rotate(45deg);box-shadow:0 1px 3px rgba(0,0,0,0.35)"></div></div><div style="position:absolute;left:241.8px;top:134px;width:107.4px;height:9.9px;background:#fff;border-radius:0 0 6px 6px"></div><div class="t" style="left:-104.80px;width:800px;text-align:center;top:66px;font-size:9.3px;font-weight:normal;color:#333;">Bishkek</div>
<div class="t" style="left:-104.80px;width:800px;text-align:center;top:76px;font-size:9.3px;font-weight:normal;color:#333;">2020-11-24 8:00 AM</div>
<div class="t" style="left:-104.80px;width:800px;text-align:center;top:85px;font-size:9.3px;font-weight:normal;color:#333;">(LT)</div>
<div style="position:absolute;left:252.3px;top:95px;width:86.6px;height:38.8px;border:1px solid #00457f;box-sizing:border-box;background:#fff"></div><div style="position:absolute;left:252.3px;top:95px;width:86.6px;height:18.2px;background:#00457f"></div><div style="position:absolute;left:307.7px;top:113.2px;width:30.2px;height:19.6px;background:#ff0000"></div><div style="position:absolute;left:307.2px;top:113.2px;width:1px;height:19.6px;background:#00457f"></div><div class="t" style="left:-120.40px;width:800px;text-align:center;top:100px;font-size:9.37px;font-weight:bold;color:#fff;">Pollutant</div>
<div class="t" style="left:-77.20px;width:800px;text-align:center;top:100px;font-size:9.37px;font-weight:bold;color:#fff;">AQI</div>
<div class="t" style="left:-120.20px;width:800px;text-align:center;top:118px;font-size:9.3px;font-weight:normal;color:#333;">PM2.5</div>
<div class="t" style="left:-77.30px;width:800px;text-align:center;top:118px;font-size:9.3px;font-weight:bold;color:#fff;">157</div>
<div style="position:absolute;left:10px;top:336px;width:712.5px;height:1px;background:#a8a8a8"></div><div style="position:absolute;left:10px;top:315.8px;width:71.5px;height:20.4px;background:#fff;border:1px solid #aaa;border-top:2px solid #00457f;border-bottom:none;border-radius:3px 3px 0 0;box-sizing:border-box"></div><div class="t" style="left:-354.20px;width:800px;text-align:center;top:324px;font-size:9.3px;font-weight:normal;color:#333;">AQI</div>
<div style="position:absolute;left:84.3px;top:316px;width:110px;height:20px;background:#d4d4d4;border-radius:3px 3px 0 0"></div><div class="t" style="left:-260.80px;width:800px;text-align:center;top:324px;font-size:9.3px;font-weight:normal;color:#707070;">Concentration</div>
<div style="position:absolute;left:197px;top:316px;width:91.7px;height:20px;background:#d4d4d4;border-radius:3px 3px 0 0"></div><div class="t" style="left:-157.20px;width:800px;text-align:center;top:324px;font-size:9.3px;font-weight:normal;color:#707070;">Historical</div>
<div class="t" style="left:10.50px;top:346px;font-size:9.3px;font-weight:normal;color:#222;">Learn more about how the Air Quality Index [AQI] is calculated from the EPA <span style="color:#1a2a4a;text-decoration:underline">here</span>.</div>
<div style="position:absolute;left:10px;top:370px;width:534px;height:212px;background:#fff"></div><div class="t" style="left:-122.80px;width:800px;text-align:center;top:375px;font-size:12.5px;font-weight:normal;color:#333;">Bishkek &#8211; PM2.5</div>
<svg style="position:absolute;left:0;top:0" width="740" height="582">
<text x="50.2" y="533.90" text-anchor="end" font-size="7.9" fill="#222" font-family="Liberation Sans">0</text>
<rect x="60.3" y="507.10" width="477.2" height="1" fill="#e6e6e6"/>
<text x="50.2" y="509.70" text-anchor="end" font-size="7.9" fill="#222" font-family="Liberation Sans">100</text>
<rect x="60.3" y="482.90" width="477.2" height="1" fill="#e6e6e6"/>
<text x="50.2" y="485.50" text-anchor="end" font-size="7.9" fill="#222" font-family="Liberation Sans">200</text>
<rect x="60.3" y="458.70" width="477.2" height="1" fill="#e6e6e6"/>
<text x="50.2" y="461.30" text-anchor="end" font-size="7.9" fill="#222" font-family="Liberation Sans">300</text>
<rect x="60.3" y="434.50" width="477.2" height="1" fill="#e6e6e6"/>
<text x="50.2" y="437.10" text-anchor="end" font-size="7.9" fill="#222" font-family="Liberation Sans">400</text>
<rect x="60.3" y="410.30" width="477.2" height="1" fill="#e6e6e6"/>
<text x="50.2" y="412.90" text-anchor="end" font-size="7.9" fill="#222" font-family="Liberation Sans">500</text>
<rect x="60.3" y="531.30" width="477.2" height="1" fill="#ccd6eb"/>
<rect x="60.30" y="531.80" width="1" height="5.5" fill="#ccd6eb"/>
<rect x="65.49" y="508.83" width="10" height="22.97" fill="#ffff00" stroke="#333" stroke-width="1"/>
<text transform="translate(72.04,542.10) rotate(-45)" text-anchor="end" font-size="8.1" fill="#666" font-family="Liberation Sans">9 AM</text>
<rect x="80.18" y="531.80" width="1" height="5.5" fill="#ccd6eb"/>
<rect x="85.37" y="511.00" width="10" height="20.80" fill="#ffff00" stroke="#333" stroke-width="1"/>
<text transform="translate(91.92,542.10) rotate(-45)" text-anchor="end" font-size="8.1" fill="#666" font-family="Liberation Sans">10 AM</text>
<rect x="100.06" y="531.80" width="1" height="5.5" fill="#ccd6eb"/>
<rect x="105.25" y="506.89" width="10" height="24.91" fill="#ff7e00" stroke="#333" stroke-width="1"/>
<text transform="translate(111.80,542.10) rotate(-45)" text-anchor="end" font-size="8.1" fill="#666" font-family="Liberation Sans">11 AM</text>
<rect x="119.94" y="531.80" width="1" height="5.5" fill="#ccd6eb"/>
<rect x="125.13" y="502.78" width="10" height="29.02" fill="#ff7e00" stroke="#333" stroke-width="1"/>
<text transform="translate(131.68,542.10) rotate(-45)" text-anchor="end" font-size="8.1" fill="#666" font-family="Liberation Sans">12 PM</text>
<rect x="139.82" y="531.80" width="1" height="5.5" fill="#ccd6eb"/>
<rect x="145.01" y="510.04" width="10" height="21.76" fill="#ffff00" stroke="#333" stroke-width="1"/>
<text transform="translate(151.56,542.10) rotate(-45)" text-anchor="end" font-size="8.1" fill="#666" font-family="Liberation Sans">1 PM</text>
<rect x="159.70" y="531.80" width="1" height="5.5" fill="#ccd6eb"/>
<rect x="164.89" y="516.09" width="10" height="15.71" fill="#ffff00" stroke="#333" stroke-width="1"/>
<text transform="translate(171.44,542.10) rotate(-45)" text-anchor="end" font-size="8.1" fill="#666" font-family="Liberation Sans">2 PM</text>
<rect x="179.57" y="531.80" width="1" height="5.5" fill="#ccd6eb"/>
<rect x="184.76" y="516.09" width="10" height="15.71" fill="#ffff00" stroke="#333" stroke-width="1"/>
<text transform="translate(191.31,542.10) rotate(-45)" text-anchor="end" font-size="8.1" fill="#666" font-family="Liberation Sans">3 PM</text>
<rect x="199.45" y="531.80" width="1" height="5.5" fill="#ccd6eb"/>
<rect x="204.64" y="516.81" width="10" height="14.99" fill="#ffff00" stroke="#333" stroke-width="1"/>
<text transform="translate(211.19,542.10) rotate(-45)" text-anchor="end" font-size="8.1" fill="#666" font-family="Liberation Sans">4 PM</text>
<rect x="219.33" y="531.80" width="1" height="5.5" fill="#ccd6eb"/>
<rect x="224.52" y="517.54" width="10" height="14.26" fill="#ffff00" stroke="#333" stroke-width="1"/>
<text transform="translate(231.07,542.10) rotate(-45)" text-anchor="end" font-size="8.1" fill="#666" font-family="Liberation Sans">5 PM</text>
<rect x="239.21" y="531.80" width="1" height="5.5" fill="#ccd6eb"/>
<rect x="244.40" y="492.85" width="10" height="38.95" fill="#ff0000" stroke="#333" stroke-width="1"/>
<text transform="translate(250.95,542.10) rotate(-45)" text-anchor="end" font-size="8.1" fill="#666" font-family="Liberation Sans">6 PM</text>
<rect x="259.09" y="531.80" width="1" height="5.5" fill="#ccd6eb"/>
<rect x="264.28" y="487.05" width="10" height="44.75" fill="#ff0000" stroke="#333" stroke-width="1"/>
<text transform="translate(270.83,542.10) rotate(-45)" text-anchor="end" font-size="8.1" fill="#666" font-family="Liberation Sans">7 PM</text>
<rect x="278.97" y="531.80" width="1" height="5.5" fill="#ccd6eb"/>
<rect x="284.16" y="487.29" width="10" height="44.51" fill="#ff0000" stroke="#333" stroke-width="1"/>
<text transform="translate(290.71,542.10) rotate(-45)" text-anchor="end" font-size="8.1" fill="#666" font-family="Liberation Sans">8 PM</text>
<rect x="298.85" y="531.80" width="1" height="5.5" fill="#ccd6eb"/>
<rect x="304.04" y="487.29" width="10" height="44.51" fill="#ff0000" stroke="#333" stroke-width="1"/>
<text transform="translate(310.59,542.10) rotate(-45)" text-anchor="end" font-size="8.1" fill="#666" font-family="Liberation Sans">9 PM</text>
<rect x="318.73" y="531.80" width="1" height="5.5" fill="#ccd6eb"/>
<rect x="323.92" y="480.03" width="10" height="51.77" fill="#99004c" stroke="#333" stroke-width="1"/>
<text transform="translate(330.47,542.10) rotate(-45)" text-anchor="end" font-size="8.1" fill="#666" font-family="Liberation Sans">10 PM</text>
<rect x="338.61" y="531.80" width="1" height="5.5" fill="#ccd6eb"/>
<rect x="343.80" y="483.66" width="10" height="48.14" fill="#99004c" stroke="#333" stroke-width="1"/>
<text transform="translate(350.35,542.10) rotate(-45)" text-anchor="end" font-size="8.1" fill="#666" font-family="Liberation Sans">11 PM</text>
<rect x="358.49" y="531.80" width="1" height="5.5" fill="#ccd6eb"/>
<rect x="363.68" y="478.58" width="10" height="53.22" fill="#99004c" stroke="#333" stroke-width="1"/>
<text transform="translate(370.23,542.10) rotate(-45)" text-anchor="end" font-size="8.1" fill="#666" font-family="Liberation Sans">Nov 24, 2020 12 AM</text>
<rect x="378.37" y="531.80" width="1" height="5.5" fill="#ccd6eb"/>
<rect x="383.56" y="481.48" width="10" height="50.32" fill="#99004c" stroke="#333" stroke-width="1"/>
<text transform="translate(390.11,542.10) rotate(-45)" text-anchor="end" font-size="8.1" fill="#666" font-family="Liberation Sans">1 AM</text>
<rect x="398.25" y="531.80" width="1" height="5.5" fill="#ccd6eb"/>
<rect x="403.44" y="482.21" width="10" height="49.59" fill="#99004c" stroke="#333" stroke-width="1"/>
<text transform="translate(409.99,542.10) rotate(-45)" text-anchor="end" font-size="8.1" fill="#666" font-family="Liberation Sans">2 AM</text>
<rect x="418.12" y="531.80" width="1" height="5.5" fill="#ccd6eb"/>
<rect x="423.31" y="485.35" width="10" height="46.45" fill="#ff0000" stroke="#333" stroke-width="1"/>
<text transform="translate(429.86,542.10) rotate(-45)" text-anchor="end" font-size="8.1" fill="#666" font-family="Liberation Sans">3 AM</text>
<rect x="438.00" y="531.80" width="1" height="5.5" fill="#ccd6eb"/>
<rect x="443.19" y="486.80" width="10" height="45.00" fill="#ff0000" stroke="#333" stroke-width="1"/>
<text transform="translate(449.74,542.10) rotate(-45)" text-anchor="end" font-size="8.1" fill="#666" font-family="Liberation Sans">4 AM</text>
<rect x="457.88" y="531.80" width="1" height="5.5" fill="#ccd6eb"/>
<rect x="463.07" y="487.29" width="10" height="44.51" fill="#ff0000" stroke="#333" stroke-width="1"/>
<text transform="translate(469.62,542.10) rotate(-45)" text-anchor="end" font-size="8.1" fill="#666" font-family="Liberation Sans">5 AM</text>
<rect x="477.76" y="531.80" width="1" height="5.5" fill="#ccd6eb"/>
<rect x="482.95" y="488.74" width="10" height="43.06" fill="#ff0000" stroke="#333" stroke-width="1"/>
<text transform="translate(489.50,542.10) rotate(-45)" text-anchor="end" font-size="8.1" fill="#666" font-family="Liberation Sans">6 AM</text>
<rect x="497.64" y="531.80" width="1" height="5.5" fill="#ccd6eb"/>
<rect x="502.83" y="491.64" width="10" height="40.16" fill="#ff0000" stroke="#333" stroke-width="1"/>
<text transform="translate(509.38,542.10) rotate(-45)" text-anchor="end" font-size="8.1" fill="#666" font-family="Liberation Sans">7 AM</text>
<rect x="517.52" y="531.80" width="1" height="5.5" fill="#ccd6eb"/>
<rect x="522.71" y="494.31" width="10" height="37.49" fill="#ff0000" stroke="#333" stroke-width="1"/>
<text transform="translate(529.26,542.10) rotate(-45)" text-anchor="end" font-size="8.1" fill="#666" font-family="Liberation Sans">8 AM</text>
<rect x="537.4" y="531.80" width="1" height="5.5" fill="#ccd6eb"/>
<text transform="translate(29.5,468.5) rotate(-90)" text-anchor="middle" font-size="8" fill="#222" font-family="Liberation Sans">AQI</text>
</svg><div style="position:absolute;left:555px;top:370px;width:168px;height:210px;background:#f0f0f0;border:1px solid #004680;box-sizing:border-box"></div><div style="position:absolute;left:555px;top:370px;width:168px;height:50px;background:#004680"></div><div style="position:absolute;left:556px;top:420px;width:166px;height:77px;background:#ff0000"></div><div class="t" style="left:239.00px;width:800px;text-align:center;top:376px;font-size:10.0px;font-weight:bold;color:#fff;">Current Conditions</div>
<div class="t" style="left:239.00px;width:800px;text-align:center;top:392px;font-size:8.1px;font-weight:bold;color:#fff;">observed at</div>
<div class="t" style="left:239.00px;width:800px;text-align:center;top:404px;font-size:10.0px;font-weight:bold;color:#fff;">Nov 24, 2020 8:00 AM (LT)</div>
<div class="t" style="left:239.00px;width:800px;text-align:center;top:433px;font-size:13.2px;font-weight:bold;color:#fff;">157 AQI</div>
<div class="t" style="left:239.00px;width:800px;text-align:center;top:452px;font-size:13.2px;font-weight:bold;color:#fff;">Unhealthy</div>
<div class="t" style="left:239.00px;width:800px;text-align:center;top:472px;font-size:13.2px;font-weight:bold;color:#fff;">PM2.5</div>
<div class="t" style="left:239.00px;width:800px;text-align:center;top:504px;font-size:8.0px;font-weight:bold;color:#222;">Health Message</div>
<div class="t" style="left:559.50px;top:521px;font-size:7.95px;font-weight:normal;color:#555;">Everyone may begin to experience health</div>
<div class="t" style="left:559.50px;top:535px;font-size:7.95px;font-weight:normal;color:#555;">effects when AQI values are between 151</div>
<div class="t" style="left:559.50px;top:548px;font-size:7.95px;font-weight:normal;color:#555;">and 200. Members of sensitive groups may</div>
<div class="t" style="left:559.50px;top:562px;font-size:7.95px;font-weight:normal;color:#555;">experience more serious health effects.</div>

</body></html>
